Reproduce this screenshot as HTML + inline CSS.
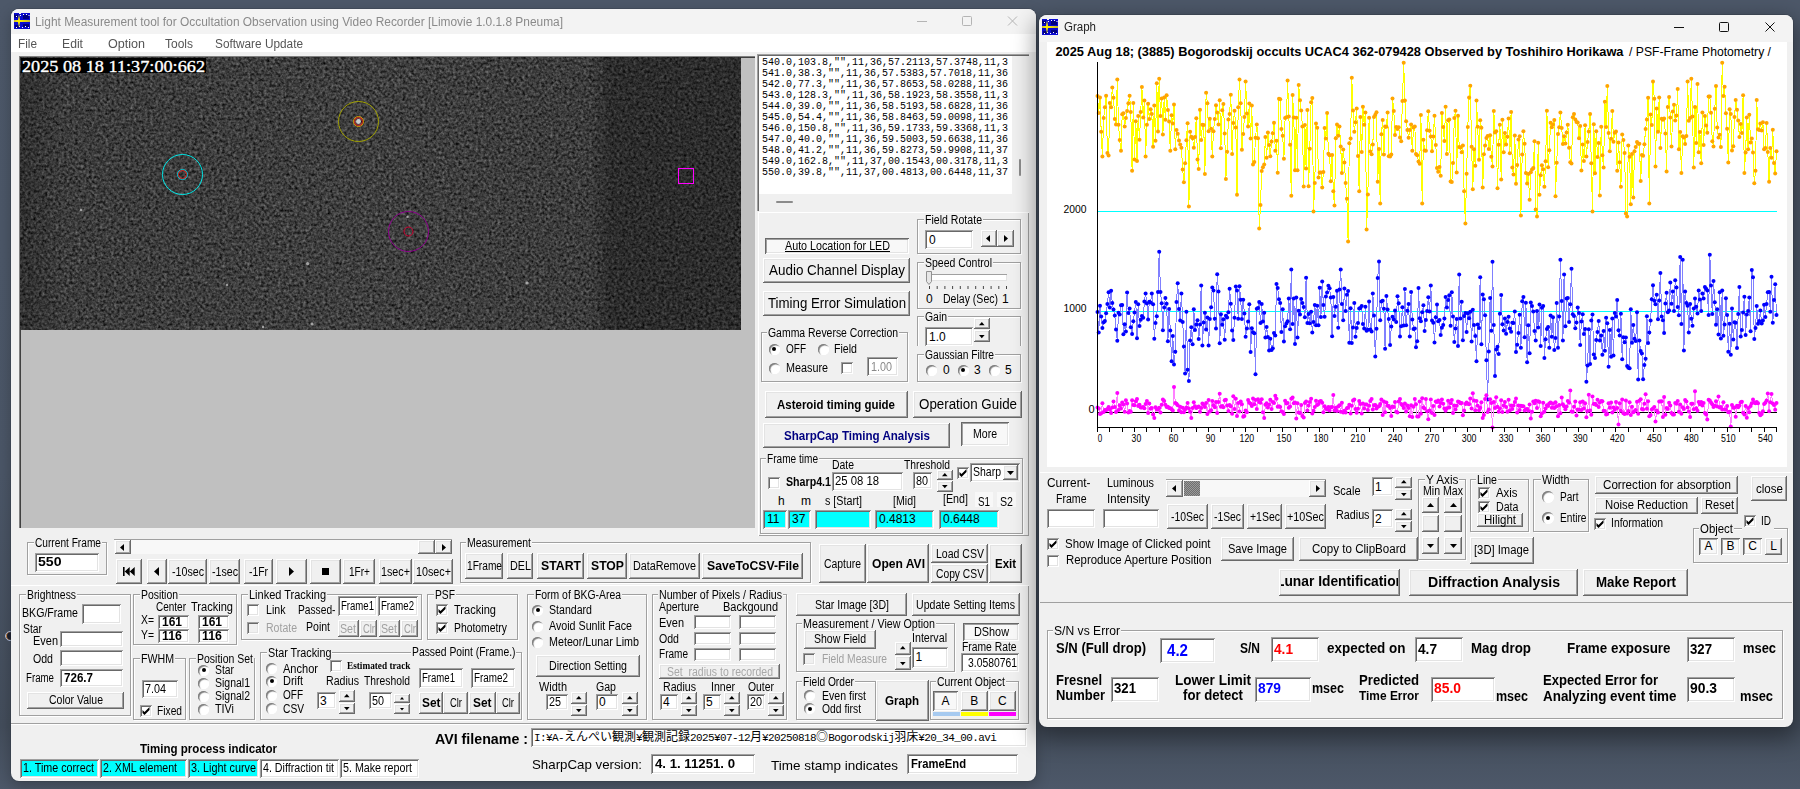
<!DOCTYPE html><html><head><meta charset="utf-8"><title>Limovie</title><style>
html,body{margin:0;padding:0}
body{width:1800px;height:789px;overflow:hidden;position:relative;background:linear-gradient(180deg,#4d5869 0%,#4b5667 60%,#434d5b 92%,#4d5869 100%);font-family:"Liberation Sans","Noto Sans CJK JP",sans-serif;font-size:12px;color:#000}
.abs,.t,.a,.btn,.ed,.fr,.fl,.ck,.rd,.tog,.win{position:absolute;box-sizing:border-box}
.t{white-space:pre;transform-origin:0 50%}
.win{background:#f0f0f0;border-radius:8px;box-shadow:0 0 0 1px rgba(40,45,55,.3),0 8px 22px 4px rgba(0,0,0,.38)}
.btn{background:#f0f0f0;box-shadow:inset -1px -1px 0 #696969,inset 1px 1px 0 #fff,inset -2px -2px 0 #a0a0a0,inset 2px 2px 0 #e3e3e3}
.tog{background:#f8f8f8;box-shadow:inset 1px 1px 0 #696969,inset -1px -1px 0 #fff,inset 2px 2px 0 #a0a0a0,inset -2px -2px 0 #e3e3e3}
.ed{background:#fff;box-shadow:inset 1px 1px 0 #a0a0a0,inset -1px -1px 0 #fff,inset 2px 2px 0 #696969,inset -2px -2px 0 #e3e3e3}
.fr{border:1px solid #a0a0a0;box-shadow:1px 1px 0 #fff,inset 1px 1px 0 #fff}
.fl{background:#f0f0f0}
.ck{background:#fff;box-shadow:inset 1px 1px 0 #a0a0a0,inset -1px -1px 0 #fff,inset 2px 2px 0 #696969,inset -2px -2px 0 #e3e3e3}
.ck.dis{background:#f0f0f0}
.rd{background:#fff;border-radius:50%;box-shadow:inset 1px 1px 0 #808080,inset -1px -1px 0 #fff,inset 1.5px 1.5px 1px #9a9a9a}
.rd i{position:absolute;left:50%;top:50%;width:4px;height:4px;margin:-2px 0 0 -2px;border-radius:50%;background:#000}
</style></head><body>
<div class="abs" style="left:5px;top:630.5px;width:10px;height:10px;border-radius:50%;background:#1c2030;border:1.5px solid #b9c6e6;box-shadow:inset 1px 0 0 #d08030"></div>
<div class="win" style="left:11px;top:9px;width:1025px;height:772px;box-shadow:0 0 0 1px rgba(40,45,55,.22),0 5px 14px 1px rgba(0,0,0,.22)"></div>
<div class="abs" style="left:11px;top:9px;width:1025px;height:25px;background:#f3f3f3;border-radius:8px 8px 0 0"></div>
<div class="abs" style="left:11px;top:34px;width:1025px;height:18px;background:#fff"></div>
<svg class="a" style="left:14px;top:13px" width="16" height="16" viewBox="0 0 16 16"><rect x="0" y="1" width="16" height="15" fill="#0a0ad0"/><path d="M0 0 h5 v1 h2 v-1 h9 v2 h-16z" fill="#0a0ad0"/><path d="M0 1 q2 2 4 0 v3 q-2 2 -4 0z M9 2 h6 v4 h-6z M1 12 h4 v3 h-4z M9 11 h6 v3 h-6z" fill="#000080"/><path d="M2 3h1v1h-1z M6 2h1v1h-1z M9 1h1v1h-1z M12 1h1v1h-1z M14.500 2h1v1h-1z M2 14h1v1h-1z M5 13h1v1h-1z M8 14h1v1h-1z M11 13h1v1h-1z M14 14h1v1h-1z" fill="#fff"/><path d="M0 7.300 L4 7 L5 1.500 L6 7 L16 7.300 L16 8.700 L6 9 L5 14.500 L4 9 L0 8.700 Z" fill="#ffee00"/></svg>
<div class="t" style="left:35.0px;top:13.5px;font-size:12px;line-height:16px;color:#8a8a8a;transform:scaleX(0.9924);">Light Measurement tool for Occultation Observation using Video Recorder [Limovie 1.0.1.8 Pneuma]</div>
<svg class="a" style="left:910px;top:9px" width="126" height="25"><g stroke="#b4b4b4" stroke-width="1" fill="none"><path d="M7 12.5 H17"/><rect x="52.5" y="7.5" width="9" height="9" rx="1"/><path d="M98 7.5 L107 16.5 M107 7.5 L98 16.5"/></g></svg>
<div class="t" style="left:18.0px;top:36.0px;font-size:12px;line-height:16px;color:#555;transform:scaleX(0.9827);">File</div>
<div class="t" style="left:62.0px;top:36.0px;font-size:12px;line-height:16px;color:#555;transform:scaleX(1.0156);">Edit</div>
<div class="t" style="left:108.0px;top:36.0px;font-size:12px;line-height:16px;color:#555;transform:scaleX(1.0466);">Option</div>
<div class="t" style="left:165.0px;top:36.0px;font-size:12px;line-height:16px;color:#555;transform:scaleX(0.9996);">Tools</div>
<div class="t" style="left:215.0px;top:36.0px;font-size:12px;line-height:16px;color:#555;transform:scaleX(0.9846);">Software Update</div>
<div class="abs" style="left:19.0px;top:56.0px;width:736.0px;height:471.5px;background:#c0c0c0;box-shadow:inset 1px 1px 0 #808080,inset 2px 2px 0 #404040;"></div>
<svg class="a" style="left:20px;top:57px" width="721" height="273"><defs><filter id="nz" x="0" y="0" width="100%" height="100%" color-interpolation-filters="sRGB"><feTurbulence type="fractalNoise" baseFrequency="0.36" numOctaves="2" seed="7" result="n"/><feColorMatrix type="matrix" values="0.5 0.2 0 0 -0.105  0.5 0.2 0 0 -0.105  0.5 0.2 0 0 -0.105  0 0 0 0 1"/></filter><linearGradient id="vg" x1="0" x2="1" y1="0" y2="0"><stop offset="0" stop-color="#000" stop-opacity="0.25"/><stop offset="0.06" stop-color="#000" stop-opacity="0.05"/><stop offset="0.5" stop-color="#000" stop-opacity="0"/><stop offset="0.79" stop-color="#000" stop-opacity="0.05"/><stop offset="0.82" stop-color="#000" stop-opacity="0.3"/><stop offset="1" stop-color="#000" stop-opacity="0.3"/></linearGradient></defs><rect width="721" height="273" fill="#3a3a3a"/><rect width="721" height="273" filter="url(#nz)" opacity="1"/><rect width="721" height="273" fill="url(#vg)"/><circle cx="338.5" cy="64.5" r="2.4" fill="#ccc" opacity="1"/><circle cx="287.6" cy="206.6" r="1.7" fill="#ccc" opacity="0.7"/><circle cx="507.0" cy="226.0" r="1.6" fill="#ccc" opacity="0.7"/><circle cx="292.0" cy="267.0" r="1.6" fill="#ccc" opacity="0.7"/><circle cx="61.0" cy="153.0" r="1.3" fill="#ccc" opacity="0.7"/><circle cx="387.5" cy="160.0" r="1.2" fill="#ccc" opacity="0.7"/><circle cx="207.0" cy="228.0" r="1.3" fill="#ccc" opacity="0.7"/><circle cx="243.0" cy="270.0" r="1.2" fill="#ccc" opacity="0.7"/><g fill="none" stroke-width="1"><circle cx="162.5" cy="117.5" r="20" stroke="#00e8e8"/><circle cx="162.5" cy="117.5" r="5" stroke="#00c8d8"/><circle cx="162.5" cy="117.5" r="4" stroke="#e02020"/><circle cx="338.5" cy="64.5" r="20" stroke="#a0a000"/><circle cx="338.5" cy="64.5" r="5" stroke="#d0a000"/><circle cx="338.5" cy="64.5" r="4" stroke="#e02020"/><circle cx="388.5" cy="174.5" r="20" stroke="#900090"/><circle cx="388.5" cy="174.5" r="4.5" stroke="#d00030"/><rect x="658.5" y="111.5" width="15" height="15" stroke="#ff00ff"/></g><rect x="1" y="1" width="185" height="15" fill="#000"/><text x="2" y="14.5" font-family="Liberation Serif,serif" font-size="17.5" fill="#fff" stroke="#fff" stroke-width="0.35" textLength="183" lengthAdjust="spacingAndGlyphs" xml:space="preserve">2025 08 18 11:37:00:662</text></svg>
<div class="abs" style="left:757.0px;top:54.0px;width:272.0px;height:157.0px;background:#f0f0f0;box-shadow:inset 1px 1px 0 #a0a0a0,inset 2px 2px 0 #696969;"></div>
<div class="abs" style="left:759.0px;top:56.0px;width:253.0px;height:138.0px;background:#fff;"></div>
<div class="t" style="left:762.0px;top:56.0px;font-size:10px;line-height:14px;font-family:'Liberation Mono','Noto Sans CJK JP',monospace;letter-spacing:0px;">540.0,103.8,"",11,36,57.2113,57.3748,11,3</div>
<div class="t" style="left:762.0px;top:67.0px;font-size:10px;line-height:14px;font-family:'Liberation Mono','Noto Sans CJK JP',monospace;letter-spacing:0px;">541.0,38.3,"",11,36,57.5383,57.7018,11,36</div>
<div class="t" style="left:762.0px;top:78.0px;font-size:10px;line-height:14px;font-family:'Liberation Mono','Noto Sans CJK JP',monospace;letter-spacing:0px;">542.0,77.3,"",11,36,57.8653,58.0288,11,36</div>
<div class="t" style="left:762.0px;top:89.0px;font-size:10px;line-height:14px;font-family:'Liberation Mono','Noto Sans CJK JP',monospace;letter-spacing:0px;">543.0,128.3,"",11,36,58.1923,58.3558,11,3</div>
<div class="t" style="left:762.0px;top:100.0px;font-size:10px;line-height:14px;font-family:'Liberation Mono','Noto Sans CJK JP',monospace;letter-spacing:0px;">544.0,39.0,"",11,36,58.5193,58.6828,11,36</div>
<div class="t" style="left:762.0px;top:111.0px;font-size:10px;line-height:14px;font-family:'Liberation Mono','Noto Sans CJK JP',monospace;letter-spacing:0px;">545.0,54.4,"",11,36,58.8463,59.0098,11,36</div>
<div class="t" style="left:762.0px;top:122.0px;font-size:10px;line-height:14px;font-family:'Liberation Mono','Noto Sans CJK JP',monospace;letter-spacing:0px;">546.0,150.8,"",11,36,59.1733,59.3368,11,3</div>
<div class="t" style="left:762.0px;top:133.0px;font-size:10px;line-height:14px;font-family:'Liberation Mono','Noto Sans CJK JP',monospace;letter-spacing:0px;">547.0,40.0,"",11,36,59.5003,59.6638,11,36</div>
<div class="t" style="left:762.0px;top:144.0px;font-size:10px;line-height:14px;font-family:'Liberation Mono','Noto Sans CJK JP',monospace;letter-spacing:0px;">548.0,41.2,"",11,36,59.8273,59.9908,11,37</div>
<div class="t" style="left:762.0px;top:155.0px;font-size:10px;line-height:14px;font-family:'Liberation Mono','Noto Sans CJK JP',monospace;letter-spacing:0px;">549.0,162.8,"",11,37,00.1543,00.3178,11,3</div>
<div class="t" style="left:762.0px;top:166.0px;font-size:10px;line-height:14px;font-family:'Liberation Mono','Noto Sans CJK JP',monospace;letter-spacing:0px;">550.0,39.8,"",11,37,00.4813,00.6448,11,37</div>
<div class="abs" style="left:1019.0px;top:159.0px;width:2.0px;height:17.0px;background:#8b8b8b;border-radius:1px"></div>
<div class="abs" style="left:776.0px;top:201.0px;width:17.0px;height:2.0px;background:#8b8b8b;border-radius:1px"></div>
<div class="abs" style="left:758.0px;top:212.0px;width:271.0px;height:324.0px;box-shadow:inset 1px 1px 0 #fff,inset -1px -1px 0 #a0a0a0;"></div>
<div class="tog" style="left:765.0px;top:238.0px;width:144.0px;height:16.0px;"></div>
<div class="t" style="left:784.5px;top:238.0px;font-size:12px;line-height:16px;text-decoration:underline;transform:scaleX(0.8944);">Auto Location for LED</div>
<div class="btn" style="left:763.0px;top:258.0px;width:147.0px;height:24.5px;"></div>
<div class="t" style="left:768.5px;top:261.2px;font-size:14px;line-height:18px;transform:scaleX(0.9602);">Audio Channel Display</div>
<div class="btn" style="left:763.0px;top:290.5px;width:147.0px;height:25.5px;"></div>
<div class="t" style="left:767.5px;top:294.2px;font-size:14px;line-height:18px;transform:scaleX(0.9469);">Timing Error Simulation</div>
<div class="fr" style="left:917.0px;top:219.0px;width:104.0px;height:34.5px;"></div>
<div class="fl" style="left:924.0px;top:213.0px;width:59.0px;height:14.0px;"></div>
<div class="t" style="left:925.0px;top:212.3px;font-size:12px;line-height:16px;transform:scaleX(0.8811);">Field Rotate</div>
<div class="ed" style="left:925.0px;top:230.0px;width:48.0px;height:19.0px;"></div>
<div class="t" style="left:929.0px;top:231.5px;font-size:12px;line-height:16px;">0</div>
<div class="btn" style="left:981.0px;top:230.0px;width:16.0px;height:17.0px;"></div>
<svg class="a" style="left:985.2px;top:234.0px" width="6.0" height="9.0"><polygon points="5.0,1.0 5.0,8.0 1.0,4.5" fill="#000"/></svg>
<div class="btn" style="left:997.0px;top:230.0px;width:17.0px;height:17.0px;"></div>
<svg class="a" style="left:1003.2px;top:234.0px" width="6.0" height="9.0"><polygon points="1.0,1.0 1.0,8.0 5.0,4.5" fill="#000"/></svg>
<div class="fr" style="left:917.0px;top:262.0px;width:104.0px;height:46.5px;"></div>
<div class="fl" style="left:924.0px;top:256.0px;width:69.0px;height:14.0px;"></div>
<div class="t" style="left:925.0px;top:255.3px;font-size:12px;line-height:16px;transform:scaleX(0.8734);">Speed Control</div>
<div class="abs" style="left:930.0px;top:273.5px;width:77.0px;height:7.5px;background:#fff;box-shadow:inset 1px 1px 0 #a0a0a0,inset -1px -1px 0 #e3e3e3;"></div>
<svg class="a" style="left:926px;top:271px" width="7" height="15"><path d="M0.5 0.500 H5.500 V10.500 L3 13.500 L0.500 10.500 Z" fill="#e6e6e6" stroke="#909090"/></svg>
<svg class="a" style="left:928px;top:286px" width="80" height="5"><path d="M1.5 0 V3 M9.2 0 V3 M16.9 0 V3 M24.6 0 V3 M32.3 0 V3 M40.0 0 V3 M47.7 0 V3 M55.4 0 V3 M63.1 0 V3 M70.8 0 V3 M78.5 0 V3 " stroke="#444" stroke-width="1" fill="none"/></svg>
<div class="t" style="left:926.0px;top:291.0px;font-size:12px;line-height:16px;">0</div>
<div class="t" style="left:942.5px;top:291.0px;font-size:12px;line-height:16px;transform:scaleX(0.8775);">Delay (Sec)</div>
<div class="t" style="left:1002.0px;top:291.0px;font-size:12px;line-height:16px;">1</div>
<div class="fr" style="left:917.0px;top:316.0px;width:104.0px;height:33.0px;"></div>
<div class="fl" style="left:924.0px;top:310.0px;width:24.0px;height:14.0px;"></div>
<div class="t" style="left:925.0px;top:309.3px;font-size:12px;line-height:16px;transform:scaleX(0.8680);">Gain</div>
<div class="abs" style="left:916.0px;top:346.0px;width:107.0px;height:6.0px;background:#f0f0f0;"></div>
<div class="ed" style="left:925.0px;top:327.0px;width:48.0px;height:19.0px;"></div>
<div class="t" style="left:929.0px;top:328.5px;font-size:12px;line-height:16px;">1.0</div>
<div class="btn" style="left:974.0px;top:318.0px;width:16.0px;height:11.0px;"></div>
<svg class="a" style="left:978.2px;top:320.6px" width="7.6" height="5.3"><polygon points="1.0,4.3 6.6,4.3 3.8,1.0" fill="#000"/></svg>
<div class="btn" style="left:974.0px;top:330.0px;width:16.0px;height:12.0px;"></div>
<svg class="a" style="left:978.2px;top:333.6px" width="7.6" height="5.3"><polygon points="1.0,1.0 6.6,1.0 3.8,4.3" fill="#000"/></svg>
<div class="fr" style="left:917.0px;top:353.5px;width:104.0px;height:28.0px;"></div>
<div class="fl" style="left:924.0px;top:347.5px;width:71.0px;height:14.0px;"></div>
<div class="t" style="left:925.0px;top:346.8px;font-size:12px;line-height:16px;transform:scaleX(0.8551);">Gaussian Filtre</div>
<div class="rd" style="left:925.5px;top:364.5px;width:11.0px;height:11.0px;"></div>
<div class="t" style="left:943.0px;top:362.0px;font-size:12px;line-height:16px;">0</div>
<div class="rd" style="left:957.5px;top:364.5px;width:11.0px;height:11.0px;"><i></i></div>
<div class="t" style="left:974.0px;top:362.0px;font-size:12px;line-height:16px;">3</div>
<div class="rd" style="left:988.5px;top:364.5px;width:11.0px;height:11.0px;"></div>
<div class="t" style="left:1005.0px;top:362.0px;font-size:12px;line-height:16px;">5</div>
<div class="fr" style="left:761.0px;top:331.5px;width:147.0px;height:50.5px;"></div>
<div class="fl" style="left:767.0px;top:325.5px;width:132.0px;height:14.0px;"></div>
<div class="t" style="left:768.0px;top:324.8px;font-size:12px;line-height:16px;transform:scaleX(0.8703);">Gamma Reverse Correction</div>
<div class="rd" style="left:768.5px;top:343.5px;width:11.0px;height:11.0px;"><i></i></div>
<div class="t" style="left:786.0px;top:341.0px;font-size:12px;line-height:16px;transform:scaleX(0.8336);">OFF</div>
<div class="rd" style="left:817.5px;top:343.5px;width:11.0px;height:11.0px;"></div>
<div class="t" style="left:834.0px;top:341.0px;font-size:12px;line-height:16px;transform:scaleX(0.8843);">Field</div>
<div class="rd" style="left:768.5px;top:362.5px;width:11.0px;height:11.0px;"></div>
<div class="t" style="left:786.0px;top:360.0px;font-size:12px;line-height:16px;transform:scaleX(0.8997);">Measure</div>
<div class="ck" style="left:841.0px;top:362.0px;width:12.0px;height:12.0px;"></div>
<div class="ed" style="left:867.0px;top:357.0px;width:31.0px;height:19.0px;"></div>
<div class="t" style="left:871.0px;top:358.5px;font-size:12px;line-height:16px;color:#8a8a8a;transform:scaleX(0.8992);">1.00</div>
<div class="btn" style="left:765.0px;top:390.5px;width:142.5px;height:27.0px;"></div>
<div class="t" style="left:777.2px;top:395.5px;font-size:13px;line-height:17px;font-weight:bold;transform:scaleX(0.8832);">Asteroid timing guide</div>
<div class="btn" style="left:913.0px;top:390.5px;width:109.0px;height:27.0px;"></div>
<div class="t" style="left:918.5px;top:395.0px;font-size:14px;line-height:18px;transform:scaleX(0.9540);">Operation Guide</div>
<div class="btn" style="left:763.0px;top:422.5px;width:187.0px;height:25.0px;"></div>
<div class="t" style="left:783.5px;top:426.5px;font-size:13px;line-height:17px;font-weight:bold;color:#000080;transform:scaleX(0.8904);">SharpCap Timing Analysis</div>
<div class="tog" style="left:961.0px;top:422.0px;width:48.0px;height:24.0px;"></div>
<div class="t" style="left:973.0px;top:426.0px;font-size:12px;line-height:16px;transform:scaleX(0.8779);">More</div>
<div class="fr" style="left:760.0px;top:457.5px;width:263.0px;height:76.0px;"></div>
<div class="fl" style="left:766.0px;top:451.5px;width:53.0px;height:14.0px;"></div>
<div class="t" style="left:767.0px;top:450.8px;font-size:12px;line-height:16px;transform:scaleX(0.8406);">Frame time</div>
<div class="ck" style="left:768.0px;top:477.0px;width:12.0px;height:12.0px;"></div>
<div class="t" style="left:786.0px;top:474.0px;font-size:12px;line-height:16px;font-weight:bold;transform:scaleX(0.8878);">Sharp4.1</div>
<div class="t" style="left:832.0px;top:457.0px;font-size:12px;line-height:16px;transform:scaleX(0.8680);">Date</div>
<div class="ed" style="left:832.0px;top:472.0px;width:71.0px;height:18.5px;"></div>
<div class="t" style="left:835.0px;top:473.2px;font-size:12px;line-height:16px;transform:scaleX(0.9421);">25 08 18</div>
<div class="t" style="left:904.0px;top:457.0px;font-size:12px;line-height:16px;transform:scaleX(0.8621);">Threshold</div>
<div class="ed" style="left:913.0px;top:472.0px;width:19.0px;height:17.0px;"></div>
<div class="t" style="left:916.0px;top:472.5px;font-size:12px;line-height:16px;transform:scaleX(0.8991);">80</div>
<div class="btn" style="left:937.0px;top:470.0px;width:16.0px;height:10.0px;"></div>
<svg class="a" style="left:941.2px;top:472.1px" width="7.6" height="5.3"><polygon points="1.0,4.3 6.6,4.3 3.8,1.0" fill="#000"/></svg>
<div class="btn" style="left:937.0px;top:481.0px;width:16.0px;height:11.0px;"></div>
<svg class="a" style="left:941.2px;top:484.1px" width="7.6" height="5.3"><polygon points="1.0,1.0 6.6,1.0 3.8,4.3" fill="#000"/></svg>
<div class="ck" style="left:957.0px;top:467.0px;width:12.0px;height:12.0px;"><svg width="12" height="12" viewBox="0 0 12 12" style="position:absolute;left:0;top:0"><path d="M2.5 5 L4.5 7 L9.5 2 L9.5 5 L4.5 10 L2.5 8 Z" fill="#000"/></svg></div>
<div class="ed" style="left:969.5px;top:462.5px;width:50.5px;height:19.0px;"></div>
<div class="t" style="left:973.0px;top:464.0px;font-size:12px;line-height:16px;transform:scaleX(0.8745);">Sharp</div>
<div class="btn" style="left:1003.0px;top:464.5px;width:15.0px;height:15.0px;"></div>
<svg class="a" style="left:1006.0px;top:469.8px" width="9.0" height="6.0"><polygon points="1.0,1.0 8.0,1.0 4.5,5.0" fill="#000"/></svg>
<div class="t" style="left:778.0px;top:492.5px;font-size:12px;line-height:16px;">h</div>
<div class="t" style="left:801.0px;top:492.5px;font-size:12px;line-height:16px;">m</div>
<div class="t" style="left:825.0px;top:492.5px;font-size:12px;line-height:16px;transform:scaleX(0.8950);">s [Start]</div>
<div class="t" style="left:893.0px;top:492.5px;font-size:12px;line-height:16px;transform:scaleX(0.8845);">[Mid]</div>
<div class="t" style="left:943.0px;top:490.5px;font-size:12px;line-height:16px;transform:scaleX(0.8923);">[End]</div>
<div class="abs" style="left:975.0px;top:492.0px;width:18.0px;height:15.0px;background:#f8f8f8"></div>
<div class="t" style="left:978.0px;top:494.0px;font-size:12px;line-height:16px;transform:scaleX(0.8176);">S1</div>
<div class="abs" style="left:997.0px;top:492.0px;width:19.0px;height:15.0px;background:#f8f8f8"></div>
<div class="t" style="left:1000.0px;top:494.0px;font-size:12px;line-height:16px;transform:scaleX(0.8857);">S2</div>
<div class="ed" style="left:763.0px;top:509.5px;width:24.0px;height:19.0px;background:#00ffff;"></div>
<div class="t" style="left:767.0px;top:511.0px;font-size:12px;line-height:16px;">11</div>
<div class="ed" style="left:788.0px;top:509.5px;width:23.0px;height:19.0px;background:#00ffff;"></div>
<div class="t" style="left:792.0px;top:511.0px;font-size:12px;line-height:16px;">37</div>
<div class="ed" style="left:815.0px;top:509.5px;width:56.0px;height:19.0px;background:#00ffff;"></div>
<div class="ed" style="left:875.0px;top:509.5px;width:59.0px;height:19.0px;background:#00ffff;"></div>
<div class="t" style="left:879.0px;top:511.0px;font-size:12px;line-height:16px;">0.4813</div>
<div class="ed" style="left:939.0px;top:509.5px;width:60.0px;height:19.0px;background:#00ffff;"></div>
<div class="t" style="left:943.0px;top:511.0px;font-size:12px;line-height:16px;">0.6448</div>
<div class="fr" style="left:27.0px;top:542.0px;width:80.0px;height:33.0px;"></div>
<div class="fl" style="left:34.0px;top:536.0px;width:68.0px;height:14.0px;"></div>
<div class="t" style="left:35.0px;top:535.3px;font-size:12px;line-height:16px;transform:scaleX(0.8460);">Current Frame</div>
<div class="ed" style="left:35.0px;top:553.0px;width:64.0px;height:19.0px;"></div>
<div class="t" style="left:38.0px;top:553.5px;font-size:12px;line-height:16px;font-weight:bold;transform:scaleX(1.1739);">550</div>
<div class="abs" style="left:114.0px;top:539.0px;width:338.0px;height:15.0px;background:#f8f8f8;box-shadow:inset 0 1px 0 #a0a0a0;"></div>
<div class="btn" style="left:115.0px;top:540.0px;width:16.0px;height:14.0px;"></div>
<svg class="a" style="left:119.2px;top:542.5px" width="6.0" height="9.0"><polygon points="5.0,1.0 5.0,8.0 1.0,4.5" fill="#000"/></svg>
<div class="btn" style="left:435.0px;top:540.0px;width:17.0px;height:14.0px;"></div>
<svg class="a" style="left:441.2px;top:542.5px" width="6.0" height="9.0"><polygon points="1.0,1.0 1.0,8.0 5.0,4.5" fill="#000"/></svg>
<div class="btn" style="left:418.0px;top:540.0px;width:17.0px;height:14.0px;"></div>
<div class="btn" style="left:116.0px;top:559.0px;width:26.0px;height:25.0px;"></div>
<svg class="a" style="left:122.5px;top:567.0px" width="12" height="9"><path d="M0 0 h1.6 v9 h-1.6z M6.7 0 v9 l-5 -4.5z M11.7 0 v9 l-5 -4.5z" fill="#000"/></svg>
<div class="btn" style="left:147.0px;top:559.0px;width:20.0px;height:25.0px;"></div>
<svg class="a" style="left:152.8px;top:566.0px" width="7.0" height="11.0"><polygon points="6.0,1.0 6.0,10.0 1.0,5.5" fill="#000"/></svg>
<div class="btn" style="left:168.0px;top:559.0px;width:39.0px;height:25.0px;"></div>
<div class="t" style="left:171.5px;top:563.5px;font-size:12px;line-height:16px;transform:scaleX(0.8885);">-10sec</div>
<div class="btn" style="left:209.0px;top:559.0px;width:31.0px;height:25.0px;"></div>
<div class="t" style="left:211.5px;top:563.5px;font-size:12px;line-height:16px;transform:scaleX(0.8861);">-1sec</div>
<div class="btn" style="left:244.0px;top:559.0px;width:29.0px;height:25.0px;"></div>
<div class="t" style="left:249.0px;top:563.5px;font-size:12px;line-height:16px;transform:scaleX(0.8639);">-1Fr</div>
<div class="btn" style="left:276.0px;top:559.0px;width:31.0px;height:25.0px;"></div>
<svg class="a" style="left:288.2px;top:566.0px" width="7.0" height="11.0"><polygon points="1.0,1.0 1.0,10.0 6.0,5.5" fill="#000"/></svg>
<div class="btn" style="left:310.0px;top:559.0px;width:31.0px;height:25.0px;"></div>
<div class="abs" style="left:322.0px;top:568.0px;width:7.0px;height:7.0px;background:#000"></div>
<div class="btn" style="left:343.0px;top:559.0px;width:32.0px;height:25.0px;"></div>
<div class="t" style="left:348.5px;top:563.5px;font-size:12px;line-height:16px;transform:scaleX(0.8398);">1Fr+</div>
<div class="btn" style="left:379.0px;top:559.0px;width:33.0px;height:25.0px;"></div>
<div class="t" style="left:381.0px;top:563.5px;font-size:12px;line-height:16px;transform:scaleX(0.8963);">1sec+</div>
<div class="btn" style="left:413.0px;top:559.0px;width:40.0px;height:25.0px;"></div>
<div class="t" style="left:415.5px;top:563.5px;font-size:12px;line-height:16px;transform:scaleX(0.8968);">10sec+</div>
<div class="fr" style="left:460.0px;top:542.0px;width:351.0px;height:41.0px;"></div>
<div class="fl" style="left:466.0px;top:536.0px;width:66.0px;height:14.0px;"></div>
<div class="t" style="left:467.0px;top:535.3px;font-size:12px;line-height:16px;transform:scaleX(0.8724);">Measurement</div>
<div class="btn" style="left:465.0px;top:552.5px;width:38.0px;height:26.0px;"></div>
<div class="t" style="left:466.5px;top:557.5px;font-size:12px;line-height:16px;transform:scaleX(0.8466);">1Frame</div>
<div class="btn" style="left:507.0px;top:552.5px;width:26.0px;height:26.0px;"></div>
<div class="t" style="left:509.5px;top:557.5px;font-size:12px;line-height:16px;transform:scaleX(0.8996);">DEL</div>
<div class="btn" style="left:537.0px;top:552.5px;width:47.0px;height:26.0px;"></div>
<div class="t" style="left:540.5px;top:557.0px;font-size:13px;line-height:17px;font-weight:bold;transform:scaleX(0.9442);">START</div>
<div class="btn" style="left:587.0px;top:552.5px;width:40.0px;height:26.0px;"></div>
<div class="t" style="left:590.5px;top:557.0px;font-size:13px;line-height:17px;font-weight:bold;transform:scaleX(0.9386);">STOP</div>
<div class="btn" style="left:629.0px;top:552.5px;width:71.0px;height:26.0px;"></div>
<div class="t" style="left:633.0px;top:557.5px;font-size:12px;line-height:16px;transform:scaleX(0.8996);">DataRemove</div>
<div class="btn" style="left:702.0px;top:552.5px;width:101.0px;height:26.0px;"></div>
<div class="t" style="left:706.5px;top:557.0px;font-size:13px;line-height:17px;font-weight:bold;transform:scaleX(0.9387);">SaveToCSV-File</div>
<div class="btn" style="left:819.0px;top:544.0px;width:47.0px;height:39.0px;"></div>
<div class="t" style="left:824.0px;top:555.5px;font-size:12px;line-height:16px;transform:scaleX(0.8668);">Capture</div>
<div class="btn" style="left:867.0px;top:544.0px;width:62.0px;height:39.0px;"></div>
<div class="t" style="left:871.5px;top:555.0px;font-size:13px;line-height:17px;font-weight:bold;transform:scaleX(0.9289);">Open AVI</div>
<div class="btn" style="left:931.0px;top:544.0px;width:57.0px;height:19.0px;"></div>
<div class="t" style="left:935.5px;top:545.5px;font-size:12px;line-height:16px;transform:scaleX(0.8775);">Load CSV</div>
<div class="btn" style="left:931.0px;top:564.0px;width:57.0px;height:19.0px;"></div>
<div class="t" style="left:935.5px;top:565.5px;font-size:12px;line-height:16px;transform:scaleX(0.8568);">Copy CSV</div>
<div class="btn" style="left:989.0px;top:544.0px;width:33.0px;height:39.0px;"></div>
<div class="t" style="left:995.0px;top:555.0px;font-size:13px;line-height:17px;font-weight:bold;transform:scaleX(0.8808);">Exit</div>
<div class="abs" style="left:11.0px;top:585.0px;width:1018.0px;height:139.0px;box-shadow:inset 0 1px 0 #fff,inset -1px -1px 0 #a0a0a0;"></div>
<div class="fr" style="left:19.0px;top:594.0px;width:112.0px;height:122.0px;"></div>
<div class="fl" style="left:26.0px;top:588.0px;width:51.0px;height:14.0px;"></div>
<div class="t" style="left:27.0px;top:587.3px;font-size:12px;line-height:16px;transform:scaleX(0.8643);">Brightness</div>
<div class="t" style="left:21.5px;top:604.5px;font-size:12px;line-height:16px;transform:scaleX(0.8841);">BKG/Frame</div>
<div class="ed" style="left:82.0px;top:604.0px;width:39.0px;height:20.0px;"></div>
<div class="t" style="left:23.0px;top:620.5px;font-size:12px;line-height:16px;transform:scaleX(0.8634);">Star</div>
<div class="t" style="left:33.0px;top:633.0px;font-size:12px;line-height:16px;transform:scaleX(0.9141);">Even</div>
<div class="ed" style="left:60.0px;top:630.5px;width:63.0px;height:16.0px;"></div>
<div class="t" style="left:33.0px;top:651.0px;font-size:12px;line-height:16px;transform:scaleX(0.8818);">Odd</div>
<div class="ed" style="left:60.0px;top:649.5px;width:63.0px;height:16.5px;"></div>
<div class="t" style="left:25.5px;top:669.5px;font-size:12px;line-height:16px;transform:scaleX(0.8077);">Frame</div>
<div class="ed" style="left:60.0px;top:668.5px;width:63.0px;height:18.5px;"></div>
<div class="t" style="left:64.0px;top:669.8px;font-size:12px;line-height:16px;font-weight:bold;transform:scaleX(0.9658);">726.7</div>
<div class="btn" style="left:27.0px;top:691.5px;width:97.0px;height:17.0px;"></div>
<div class="t" style="left:48.5px;top:692.0px;font-size:12px;line-height:16px;transform:scaleX(0.8737);">Color Value</div>
<div class="fr" style="left:133.0px;top:594.0px;width:104.0px;height:51.0px;"></div>
<div class="fl" style="left:140.0px;top:588.0px;width:39.0px;height:14.0px;"></div>
<div class="t" style="left:141.0px;top:587.3px;font-size:12px;line-height:16px;transform:scaleX(0.8667);">Position</div>
<div class="t" style="left:155.5px;top:599.0px;font-size:12px;line-height:16px;transform:scaleX(0.8330);">Center</div>
<div class="t" style="left:190.5px;top:599.0px;font-size:12px;line-height:16px;transform:scaleX(0.9217);">Tracking</div>
<div class="t" style="left:141.0px;top:611.5px;font-size:12px;line-height:16px;transform:scaleX(0.8659);">X=</div>
<div class="t" style="left:141.0px;top:626.5px;font-size:12px;line-height:16px;transform:scaleX(0.8659);">Y=</div>
<div class="ed" style="left:158.0px;top:615.0px;width:31.0px;height:14.0px;"></div>
<div class="t" style="left:162.0px;top:614.0px;font-size:12px;line-height:16px;font-weight:bold;transform:scaleX(0.9990);">161</div>
<div class="ed" style="left:198.0px;top:615.0px;width:31.0px;height:14.0px;"></div>
<div class="t" style="left:202.0px;top:614.0px;font-size:12px;line-height:16px;font-weight:bold;transform:scaleX(0.9990);">161</div>
<div class="ed" style="left:158.0px;top:629.0px;width:31.0px;height:14.0px;"></div>
<div class="t" style="left:162.0px;top:628.0px;font-size:12px;line-height:16px;font-weight:bold;transform:scaleX(1.0332);">116</div>
<div class="ed" style="left:198.0px;top:629.0px;width:31.0px;height:14.0px;"></div>
<div class="t" style="left:202.0px;top:628.0px;font-size:12px;line-height:16px;font-weight:bold;transform:scaleX(1.0332);">116</div>
<div class="fr" style="left:133.0px;top:658.0px;width:53.0px;height:62.0px;"></div>
<div class="fl" style="left:140.0px;top:652.0px;width:35.0px;height:14.0px;"></div>
<div class="t" style="left:141.0px;top:651.3px;font-size:12px;line-height:16px;transform:scaleX(0.8843);">FWHM</div>
<div class="ed" style="left:142.0px;top:680.0px;width:36.0px;height:18.0px;"></div>
<div class="t" style="left:145.0px;top:681.0px;font-size:12px;line-height:16px;transform:scaleX(0.8992);">7.04</div>
<div class="ck" style="left:140.0px;top:705.0px;width:12.0px;height:12.0px;"><svg width="12" height="12" viewBox="0 0 12 12" style="position:absolute;left:0;top:0"><path d="M2.5 5 L4.5 7 L9.5 2 L9.5 5 L4.5 10 L2.5 8 Z" fill="#000"/></svg></div>
<div class="t" style="left:157.0px;top:702.5px;font-size:12px;line-height:16px;transform:scaleX(0.8520);">Fixed</div>
<div class="fr" style="left:189.0px;top:658.0px;width:66.0px;height:62.0px;"></div>
<div class="fl" style="left:196.0px;top:652.0px;width:58.0px;height:14.0px;"></div>
<div class="t" style="left:197.0px;top:651.3px;font-size:12px;line-height:16px;transform:scaleX(0.8745);">Position Set</div>
<div class="rd" style="left:198.0px;top:664.5px;width:11.0px;height:11.0px;"><i></i></div>
<div class="t" style="left:215.0px;top:662.0px;font-size:12px;line-height:16px;transform:scaleX(0.8634);">Star</div>
<div class="rd" style="left:198.0px;top:677.5px;width:11.0px;height:11.0px;"></div>
<div class="t" style="left:215.0px;top:675.0px;font-size:12px;line-height:16px;transform:scaleX(0.8744);">Signal1</div>
<div class="rd" style="left:198.0px;top:690.5px;width:11.0px;height:11.0px;"></div>
<div class="t" style="left:215.0px;top:688.0px;font-size:12px;line-height:16px;transform:scaleX(0.8744);">Signal2</div>
<div class="rd" style="left:198.0px;top:703.5px;width:11.0px;height:11.0px;"></div>
<div class="t" style="left:215.0px;top:701.0px;font-size:12px;line-height:16px;transform:scaleX(0.8998);">TIVi</div>
<div class="fr" style="left:241.0px;top:594.0px;width:181.0px;height:46.0px;"></div>
<div class="fl" style="left:248.0px;top:588.0px;width:79.0px;height:14.0px;"></div>
<div class="t" style="left:249.0px;top:587.3px;font-size:12px;line-height:16px;transform:scaleX(0.9162);">Linked Tracking</div>
<div class="ck" style="left:247.0px;top:604.0px;width:12.0px;height:12.0px;"></div>
<div class="t" style="left:265.5px;top:602.0px;font-size:12px;line-height:16px;transform:scaleX(0.8859);">Link</div>
<div class="t" style="left:297.5px;top:602.0px;font-size:12px;line-height:16px;transform:scaleX(0.8519);">Passed-</div>
<div class="ck dis" style="left:247.0px;top:622.0px;width:12.0px;height:12.0px;"></div>
<div class="t" style="left:265.5px;top:620.0px;font-size:12px;line-height:16px;color:#a0a0a0;transform:scaleX(0.8769);">Rotate</div>
<div class="t" style="left:305.5px;top:619.0px;font-size:12px;line-height:16px;transform:scaleX(0.8775);">Point</div>
<div class="ed" style="left:338.0px;top:596.0px;width:39.0px;height:20.0px;"></div>
<div class="t" style="left:341.0px;top:598.0px;font-size:12px;line-height:16px;transform:scaleX(0.7983);">Frame1</div>
<div class="ed" style="left:378.0px;top:596.0px;width:40.0px;height:20.0px;"></div>
<div class="t" style="left:381.0px;top:598.0px;font-size:12px;line-height:16px;transform:scaleX(0.7983);">Frame2</div>
<div class="btn" style="left:337.5px;top:620.0px;width:21.5px;height:17.0px;"></div>
<div class="t" style="left:340.2px;top:620.5px;font-size:12px;line-height:16px;color:#a0a0a0;transform:scaleX(0.8883);">Set</div>
<div class="btn" style="left:360.0px;top:620.0px;width:17.0px;height:17.0px;"></div>
<div class="t" style="left:362.5px;top:620.5px;font-size:12px;line-height:16px;color:#a0a0a0;transform:scaleX(0.7829);">Clr</div>
<div class="btn" style="left:378.5px;top:620.0px;width:21.5px;height:17.0px;"></div>
<div class="t" style="left:381.2px;top:620.5px;font-size:12px;line-height:16px;color:#a0a0a0;transform:scaleX(0.8883);">Set</div>
<div class="btn" style="left:401.0px;top:620.0px;width:17.0px;height:17.0px;"></div>
<div class="t" style="left:403.5px;top:620.5px;font-size:12px;line-height:16px;color:#a0a0a0;transform:scaleX(0.7829);">Clr</div>
<div class="fr" style="left:427.0px;top:594.0px;width:91.0px;height:46.0px;"></div>
<div class="fl" style="left:434.0px;top:588.0px;width:22.0px;height:14.0px;"></div>
<div class="t" style="left:435.0px;top:587.3px;font-size:12px;line-height:16px;transform:scaleX(0.8570);">PSF</div>
<div class="ck" style="left:436.0px;top:604.0px;width:12.0px;height:12.0px;"><svg width="12" height="12" viewBox="0 0 12 12" style="position:absolute;left:0;top:0"><path d="M2.5 5 L4.5 7 L9.5 2 L9.5 5 L4.5 10 L2.5 8 Z" fill="#000"/></svg></div>
<div class="t" style="left:454.0px;top:602.0px;font-size:12px;line-height:16px;transform:scaleX(0.9217);">Tracking</div>
<div class="ck" style="left:436.0px;top:622.0px;width:12.0px;height:12.0px;"><svg width="12" height="12" viewBox="0 0 12 12" style="position:absolute;left:0;top:0"><path d="M2.5 5 L4.5 7 L9.5 2 L9.5 5 L4.5 10 L2.5 8 Z" fill="#000"/></svg></div>
<div class="t" style="left:454.0px;top:620.0px;font-size:12px;line-height:16px;transform:scaleX(0.8638);">Photometry</div>
<div class="fr" style="left:260.0px;top:652.0px;width:262.0px;height:68.0px;"></div>
<div class="fl" style="left:266.5px;top:646.0px;width:65.5px;height:14.0px;"></div>
<div class="t" style="left:267.5px;top:645.3px;font-size:12px;line-height:16px;transform:scaleX(0.8983);">Star Tracking</div>
<div class="fl" style="left:411.0px;top:645.0px;width:105.0px;height:14.0px;"></div>
<div class="t" style="left:411.5px;top:644.0px;font-size:12px;line-height:16px;transform:scaleX(0.8623);">Passed Point (Frame.)</div>
<div class="rd" style="left:266.0px;top:663.0px;width:11.0px;height:11.0px;"></div>
<div class="t" style="left:282.5px;top:660.5px;font-size:12px;line-height:16px;transform:scaleX(0.9206);">Anchor</div>
<div class="rd" style="left:266.0px;top:675.5px;width:11.0px;height:11.0px;"><i></i></div>
<div class="t" style="left:282.5px;top:673.0px;font-size:12px;line-height:16px;transform:scaleX(0.9093);">Drift</div>
<div class="rd" style="left:266.0px;top:689.5px;width:11.0px;height:11.0px;"></div>
<div class="t" style="left:282.5px;top:687.0px;font-size:12px;line-height:16px;transform:scaleX(0.8336);">OFF</div>
<div class="rd" style="left:266.0px;top:703.0px;width:11.0px;height:11.0px;"></div>
<div class="t" style="left:282.5px;top:700.5px;font-size:12px;line-height:16px;transform:scaleX(0.8511);">CSV</div>
<div class="ck" style="left:330.0px;top:660.0px;width:12.0px;height:12.0px;"></div>
<div class="t" style="left:346.5px;top:658.0px;font-size:11px;line-height:15px;font-weight:bold;font-family:'Liberation Serif',serif;transform:scaleX(0.8415);">Estimated track</div>
<div class="t" style="left:325.5px;top:673.0px;font-size:12px;line-height:16px;transform:scaleX(0.8835);">Radius</div>
<div class="t" style="left:364.0px;top:673.0px;font-size:12px;line-height:16px;transform:scaleX(0.8621);">Threshold</div>
<div class="ed" style="left:317.0px;top:692.0px;width:19.0px;height:17.0px;"></div>
<div class="t" style="left:320.0px;top:692.5px;font-size:12px;line-height:16px;">3</div>
<div class="btn" style="left:339.0px;top:690.0px;width:16.0px;height:12.0px;"></div>
<svg class="a" style="left:343.2px;top:693.1px" width="7.6" height="5.3"><polygon points="1.0,4.3 6.6,4.3 3.8,1.0" fill="#000"/></svg>
<div class="btn" style="left:339.0px;top:703.0px;width:16.0px;height:11.0px;"></div>
<svg class="a" style="left:343.2px;top:706.1px" width="7.6" height="5.3"><polygon points="1.0,1.0 6.6,1.0 3.8,4.3" fill="#000"/></svg>
<div class="ed" style="left:369.0px;top:692.0px;width:23.0px;height:17.0px;"></div>
<div class="t" style="left:372.0px;top:692.5px;font-size:12px;line-height:16px;transform:scaleX(0.8991);">50</div>
<div class="btn" style="left:394.0px;top:694.0px;width:16.0px;height:9.0px;"></div>
<svg class="a" style="left:399.0px;top:696.0px" width="6.0" height="4.5"><polygon points="1.0,3.5 5.0,3.5 3.0,1.0" fill="#000"/></svg>
<div class="btn" style="left:394.0px;top:704.0px;width:16.0px;height:10.0px;"></div>
<svg class="a" style="left:399.0px;top:707.0px" width="6.0" height="4.5"><polygon points="1.0,1.0 5.0,1.0 3.0,3.5" fill="#000"/></svg>
<div class="ed" style="left:419.0px;top:668.0px;width:44.0px;height:20.0px;"></div>
<div class="t" style="left:422.0px;top:670.0px;font-size:12px;line-height:16px;transform:scaleX(0.7983);">Frame1</div>
<div class="ed" style="left:471.0px;top:668.0px;width:44.0px;height:20.0px;"></div>
<div class="t" style="left:474.0px;top:670.0px;font-size:12px;line-height:16px;transform:scaleX(0.8224);">Frame2</div>
<div class="btn" style="left:419.0px;top:692.0px;width:24.0px;height:22.0px;"></div>
<div class="t" style="left:421.8px;top:695.0px;font-size:12px;line-height:16px;font-weight:bold;transform:scaleX(0.9907);">Set</div>
<div class="btn" style="left:443.0px;top:692.0px;width:25.0px;height:22.0px;"></div>
<div class="t" style="left:449.5px;top:695.0px;font-size:12px;line-height:16px;transform:scaleX(0.7829);">Clr</div>
<div class="btn" style="left:469.0px;top:692.0px;width:27.0px;height:22.0px;"></div>
<div class="t" style="left:473.2px;top:695.0px;font-size:12px;line-height:16px;font-weight:bold;transform:scaleX(0.9907);">Set</div>
<div class="btn" style="left:496.0px;top:692.0px;width:24.0px;height:22.0px;"></div>
<div class="t" style="left:502.0px;top:695.0px;font-size:12px;line-height:16px;transform:scaleX(0.7829);">Clr</div>
<div class="fr" style="left:527.0px;top:594.0px;width:120.0px;height:126.0px;"></div>
<div class="fl" style="left:534.0px;top:588.0px;width:88.0px;height:14.0px;"></div>
<div class="t" style="left:535.0px;top:587.3px;font-size:12px;line-height:16px;transform:scaleX(0.8656);">Form of BKG-Area</div>
<div class="rd" style="left:532.0px;top:604.5px;width:11.0px;height:11.0px;"><i></i></div>
<div class="t" style="left:549.0px;top:602.0px;font-size:12px;line-height:16px;transform:scaleX(0.8830);">Standard</div>
<div class="rd" style="left:532.0px;top:620.5px;width:11.0px;height:11.0px;"></div>
<div class="t" style="left:549.0px;top:618.0px;font-size:12px;line-height:16px;transform:scaleX(0.8909);">Avoid Sunlit Face</div>
<div class="rd" style="left:532.0px;top:636.5px;width:11.0px;height:11.0px;"></div>
<div class="t" style="left:549.0px;top:634.0px;font-size:12px;line-height:16px;transform:scaleX(0.8937);">Meteor/Lunar Limb</div>
<div class="btn" style="left:536.0px;top:655.0px;width:104.0px;height:22.0px;"></div>
<div class="t" style="left:549.0px;top:658.0px;font-size:12px;line-height:16px;transform:scaleX(0.8860);">Direction Setting</div>
<div class="t" style="left:539.0px;top:678.5px;font-size:12px;line-height:16px;transform:scaleX(0.9129);">Width</div>
<div class="t" style="left:595.5px;top:678.5px;font-size:12px;line-height:16px;transform:scaleX(0.8818);">Gap</div>
<div class="ed" style="left:546.0px;top:694.0px;width:22.0px;height:16.0px;"></div>
<div class="t" style="left:549.0px;top:694.0px;font-size:12px;line-height:16px;transform:scaleX(0.8991);">25</div>
<div class="btn" style="left:571.0px;top:692.0px;width:16.0px;height:12.0px;"></div>
<svg class="a" style="left:575.2px;top:695.1px" width="7.6" height="5.3"><polygon points="1.0,4.3 6.6,4.3 3.8,1.0" fill="#000"/></svg>
<div class="btn" style="left:571.0px;top:705.0px;width:16.0px;height:11.0px;"></div>
<svg class="a" style="left:575.2px;top:708.1px" width="7.6" height="5.3"><polygon points="1.0,1.0 6.6,1.0 3.8,4.3" fill="#000"/></svg>
<div class="ed" style="left:596.0px;top:694.0px;width:22.0px;height:16.0px;"></div>
<div class="t" style="left:599.0px;top:694.0px;font-size:12px;line-height:16px;">0</div>
<div class="btn" style="left:622.0px;top:692.0px;width:16.0px;height:12.0px;"></div>
<svg class="a" style="left:626.2px;top:695.1px" width="7.6" height="5.3"><polygon points="1.0,4.3 6.6,4.3 3.8,1.0" fill="#000"/></svg>
<div class="btn" style="left:622.0px;top:705.0px;width:16.0px;height:11.0px;"></div>
<svg class="a" style="left:626.2px;top:708.1px" width="7.6" height="5.3"><polygon points="1.0,1.0 6.6,1.0 3.8,4.3" fill="#000"/></svg>
<div class="fr" style="left:652.0px;top:594.0px;width:135.0px;height:126.0px;"></div>
<div class="fl" style="left:658.0px;top:588.0px;width:125.0px;height:14.0px;"></div>
<div class="t" style="left:659.0px;top:587.3px;font-size:12px;line-height:16px;transform:scaleX(0.8867);">Number of Pixels / Radius</div>
<div class="t" style="left:659.0px;top:599.0px;font-size:12px;line-height:16px;transform:scaleX(0.8692);">Aperture</div>
<div class="t" style="left:723.0px;top:599.0px;font-size:12px;line-height:16px;transform:scaleX(0.9160);">Backgound</div>
<div class="t" style="left:659.0px;top:614.5px;font-size:12px;line-height:16px;transform:scaleX(0.9141);">Even</div>
<div class="ed" style="left:694.0px;top:615.0px;width:37.0px;height:14.0px;"></div>
<div class="ed" style="left:739.0px;top:615.0px;width:37.0px;height:14.0px;"></div>
<div class="t" style="left:659.0px;top:630.5px;font-size:12px;line-height:16px;transform:scaleX(0.8818);">Odd</div>
<div class="ed" style="left:694.0px;top:631.5px;width:37.0px;height:13.0px;"></div>
<div class="ed" style="left:739.0px;top:631.5px;width:37.0px;height:13.0px;"></div>
<div class="t" style="left:659.0px;top:645.5px;font-size:12px;line-height:16px;transform:scaleX(0.8365);">Frame</div>
<div class="ed" style="left:694.0px;top:647.5px;width:37.0px;height:13.0px;"></div>
<div class="ed" style="left:739.0px;top:647.5px;width:37.0px;height:13.0px;"></div>
<div class="btn" style="left:659.0px;top:664.0px;width:121.0px;height:15.0px;"></div>
<div class="t" style="left:666.5px;top:663.5px;font-size:12px;line-height:16px;color:#a8a8a8;transform:scaleX(0.8732);">Set  radius to recorded</div>
<div class="t" style="left:663.0px;top:678.5px;font-size:12px;line-height:16px;transform:scaleX(0.8835);">Radius</div>
<div class="t" style="left:711.0px;top:678.5px;font-size:12px;line-height:16px;transform:scaleX(0.8776);">Inner</div>
<div class="t" style="left:747.5px;top:678.5px;font-size:12px;line-height:16px;transform:scaleX(0.8664);">Outer</div>
<div class="ed" style="left:660.0px;top:694.0px;width:18.0px;height:16.0px;"></div>
<div class="t" style="left:663.0px;top:694.0px;font-size:12px;line-height:16px;">4</div>
<div class="btn" style="left:681.0px;top:692.0px;width:16.0px;height:12.0px;"></div>
<svg class="a" style="left:685.2px;top:695.1px" width="7.6" height="5.3"><polygon points="1.0,4.3 6.6,4.3 3.8,1.0" fill="#000"/></svg>
<div class="btn" style="left:681.0px;top:705.0px;width:16.0px;height:11.0px;"></div>
<svg class="a" style="left:685.2px;top:708.1px" width="7.6" height="5.3"><polygon points="1.0,1.0 6.6,1.0 3.8,4.3" fill="#000"/></svg>
<div class="ed" style="left:703.0px;top:694.0px;width:18.0px;height:16.0px;"></div>
<div class="t" style="left:706.0px;top:694.0px;font-size:12px;line-height:16px;">5</div>
<div class="btn" style="left:724.0px;top:692.0px;width:16.0px;height:12.0px;"></div>
<svg class="a" style="left:728.2px;top:695.1px" width="7.6" height="5.3"><polygon points="1.0,4.3 6.6,4.3 3.8,1.0" fill="#000"/></svg>
<div class="btn" style="left:724.0px;top:705.0px;width:16.0px;height:11.0px;"></div>
<svg class="a" style="left:728.2px;top:708.1px" width="7.6" height="5.3"><polygon points="1.0,1.0 6.6,1.0 3.8,4.3" fill="#000"/></svg>
<div class="ed" style="left:747.0px;top:694.0px;width:18.0px;height:16.0px;"></div>
<div class="t" style="left:750.0px;top:694.0px;font-size:12px;line-height:16px;transform:scaleX(0.8991);">20</div>
<div class="btn" style="left:768.0px;top:692.0px;width:16.0px;height:12.0px;"></div>
<svg class="a" style="left:772.2px;top:695.1px" width="7.6" height="5.3"><polygon points="1.0,4.3 6.6,4.3 3.8,1.0" fill="#000"/></svg>
<div class="btn" style="left:768.0px;top:705.0px;width:16.0px;height:11.0px;"></div>
<svg class="a" style="left:772.2px;top:708.1px" width="7.6" height="5.3"><polygon points="1.0,1.0 6.6,1.0 3.8,4.3" fill="#000"/></svg>
<div class="btn" style="left:796.0px;top:593.0px;width:111.0px;height:23.0px;"></div>
<div class="t" style="left:814.5px;top:596.5px;font-size:12px;line-height:16px;transform:scaleX(0.8806);">Star Image [3D]</div>
<div class="btn" style="left:912.0px;top:593.0px;width:107.5px;height:23.0px;"></div>
<div class="t" style="left:916.2px;top:596.5px;font-size:12px;line-height:16px;transform:scaleX(0.8835);">Update Setting Items</div>
<div class="fr" style="left:796.0px;top:623.0px;width:159.0px;height:49.0px;"></div>
<div class="fl" style="left:802.0px;top:617.0px;width:134.0px;height:14.0px;"></div>
<div class="t" style="left:803.0px;top:616.3px;font-size:12px;line-height:16px;transform:scaleX(0.8929);">Measurement / View Option</div>
<div class="btn" style="left:803.5px;top:629.5px;width:72.5px;height:19.0px;"></div>
<div class="t" style="left:813.8px;top:631.0px;font-size:12px;line-height:16px;transform:scaleX(0.8760);">Show Field</div>
<div class="t" style="left:911.5px;top:629.5px;font-size:12px;line-height:16px;transform:scaleX(0.8895);">Interval</div>
<div class="ck dis" style="left:803.0px;top:653.0px;width:12.0px;height:12.0px;"></div>
<div class="t" style="left:821.5px;top:651.0px;font-size:12px;line-height:16px;color:#a0a0a0;transform:scaleX(0.8550);">Field Measure</div>
<div class="btn" style="left:895.0px;top:641.5px;width:16.0px;height:13.5px;"></div>
<svg class="a" style="left:899.2px;top:645.4px" width="7.6" height="5.3"><polygon points="1.0,4.3 6.6,4.3 3.8,1.0" fill="#000"/></svg>
<div class="btn" style="left:895.0px;top:656.0px;width:16.0px;height:14.0px;"></div>
<svg class="a" style="left:899.2px;top:660.6px" width="7.6" height="5.3"><polygon points="1.0,1.0 6.6,1.0 3.8,4.3" fill="#000"/></svg>
<div class="ed" style="left:911.5px;top:647.0px;width:36.0px;height:20.5px;"></div>
<div class="t" style="left:915.5px;top:649.2px;font-size:12px;line-height:16px;">1</div>
<div class="tog" style="left:963.0px;top:622.5px;width:56.0px;height:18.5px;"></div>
<div class="t" style="left:973.5px;top:623.5px;font-size:12px;line-height:16px;transform:scaleX(0.9048);">DShow</div>
<div class="t" style="left:961.5px;top:638.5px;font-size:12px;line-height:16px;transform:scaleX(0.8603);">Frame Rate</div>
<div class="ed" style="left:961.0px;top:652.5px;width:58.0px;height:19.5px;"></div>
<div class="t" style="left:968.0px;top:654.8px;font-size:12px;line-height:16px;transform:scaleX(0.8639);">3.0580761</div>
<div class="fr" style="left:796.0px;top:681.0px;width:80.0px;height:39.0px;"></div>
<div class="fl" style="left:802.0px;top:675.0px;width:53.0px;height:14.0px;"></div>
<div class="t" style="left:803.0px;top:674.3px;font-size:12px;line-height:16px;transform:scaleX(0.8498);">Field Order</div>
<div class="rd" style="left:804.0px;top:690.0px;width:11.0px;height:11.0px;"></div>
<div class="t" style="left:821.5px;top:687.5px;font-size:12px;line-height:16px;transform:scaleX(0.8798);">Even first</div>
<div class="rd" style="left:804.0px;top:703.0px;width:11.0px;height:11.0px;"><i></i></div>
<div class="t" style="left:821.5px;top:701.3px;font-size:12px;line-height:16px;transform:scaleX(0.8601);">Odd first</div>
<div class="btn" style="left:875.5px;top:680.0px;width:53.5px;height:40.5px;"></div>
<div class="t" style="left:885.2px;top:691.8px;font-size:13px;line-height:17px;font-weight:bold;transform:scaleX(0.8882);">Graph</div>
<div class="fr" style="left:930.0px;top:681.0px;width:89.0px;height:39.0px;"></div>
<div class="fl" style="left:936.0px;top:675.0px;width:70.0px;height:14.0px;"></div>
<div class="t" style="left:937.0px;top:674.3px;font-size:12px;line-height:16px;transform:scaleX(0.8715);">Current Object</div>
<div class="tog" style="left:933.0px;top:690.5px;width:25.0px;height:20.5px;"></div>
<div class="t" style="left:941.5px;top:692.5px;font-size:12px;line-height:16px;transform:scaleX(1.0000);">A</div>
<div class="abs" style="left:933.0px;top:712.0px;width:27.0px;height:4.0px;background:#a6caf0"></div>
<div class="btn" style="left:961.0px;top:690.5px;width:26.5px;height:20.5px;"></div>
<div class="t" style="left:970.2px;top:692.5px;font-size:12px;line-height:16px;transform:scaleX(1.0000);">B</div>
<div class="abs" style="left:961.0px;top:712.0px;width:27.0px;height:4.0px;background:#ffff00"></div>
<div class="btn" style="left:989.0px;top:690.5px;width:26.5px;height:20.5px;"></div>
<div class="t" style="left:997.9px;top:692.5px;font-size:12px;line-height:16px;transform:scaleX(1.0000);">C</div>
<div class="abs" style="left:989.0px;top:712.0px;width:27.0px;height:4.0px;background:#ff00ff"></div>
<div class="abs" style="left:11.0px;top:724.0px;width:1018.0px;height:54.0px;box-shadow:inset 0 1px 0 #fff;"></div>
<div class="t" style="left:435.0px;top:729.0px;font-size:15px;line-height:19px;font-weight:bold;transform:scaleX(0.9483);">AVI filename :</div>
<div class="ed" style="left:531.0px;top:728.0px;width:496.0px;height:19.0px;"></div>
<div class="t" style="left:534.0px;top:729.5px;line-height:16px;font-family:'Liberation Mono','Noto Sans CJK JP',monospace"><span style="font-size:11px;letter-spacing:-0.6px">I:¥A-</span><span style="font-size:12px;letter-spacing:0">えんぺい観測</span><span style="font-size:11px;letter-spacing:-0.6px">¥</span><span style="font-size:12px;letter-spacing:0">観測記録</span><span style="font-size:11px;letter-spacing:-0.6px">2025¥07-12</span><span style="font-size:12px;letter-spacing:0">月</span><span style="font-size:11px;letter-spacing:-0.6px">¥20250818</span><span style="font-size:12px;letter-spacing:0">◎</span><span style="font-size:11px;letter-spacing:-0.6px">Bogorodskij</span><span style="font-size:12px;letter-spacing:0">羽床</span><span style="font-size:11px;letter-spacing:-0.6px">¥20_34_00.avi</span></div>
<div class="t" style="left:140.0px;top:740.5px;font-size:12px;line-height:16px;font-weight:bold;transform:scaleX(0.9616);">Timing process indicator</div>
<div class="ed" style="left:19.5px;top:758.5px;width:79.0px;height:19.0px;background:#00ffff;"></div>
<div class="t" style="left:23.0px;top:760.0px;font-size:12px;line-height:16px;transform:scaleX(0.8948);">1. Time correct</div>
<div class="ed" style="left:99.5px;top:758.5px;width:87.0px;height:19.0px;background:#00ffff;"></div>
<div class="t" style="left:103.0px;top:760.0px;font-size:12px;line-height:16px;transform:scaleX(0.8853);">2. XML element</div>
<div class="ed" style="left:187.5px;top:758.5px;width:71.0px;height:19.0px;background:#00ffff;"></div>
<div class="t" style="left:191.0px;top:760.0px;font-size:12px;line-height:16px;transform:scaleX(0.9023);">3. Light curve</div>
<div class="ed" style="left:259.5px;top:758.5px;width:79.0px;height:19.0px;background:#fff;"></div>
<div class="t" style="left:263.0px;top:760.0px;font-size:12px;line-height:16px;transform:scaleX(0.8897);">4. Diffraction tit</div>
<div class="ed" style="left:339.5px;top:758.5px;width:79.0px;height:19.0px;background:#fff;"></div>
<div class="t" style="left:343.0px;top:760.0px;font-size:12px;line-height:16px;transform:scaleX(0.8919);">5. Make report</div>
<div class="t" style="left:531.5px;top:756.2px;font-size:13px;line-height:17px;transform:scaleX(1.0217);">SharpCap version:</div>
<div class="ed" style="left:651.0px;top:754.0px;width:104.0px;height:20.0px;"></div>
<div class="t" style="left:655.0px;top:755.7px;font-size:12px;line-height:16px;font-weight:bold;transform:scaleX(1.1000);">4. 1. 11251. 0</div>
<div class="t" style="left:771.0px;top:756.5px;font-size:13px;line-height:17px;transform:scaleX(1.0382);">Time stamp indicates</div>
<div class="ed" style="left:907.0px;top:754.0px;width:111.0px;height:20.0px;"></div>
<div class="t" style="left:911.0px;top:755.7px;font-size:12px;line-height:16px;font-weight:bold;transform:scaleX(0.9373);">FrameEnd</div>
<div class="win" style="left:1039px;top:15px;width:754px;height:712px;"></div>
<div class="abs" style="left:1039px;top:15px;width:754px;height:27px;background:#f3f3f3;border-radius:8px 8px 0 0"></div>
<svg class="a" style="left:1042px;top:19px" width="16" height="16" viewBox="0 0 16 16"><rect x="0" y="1" width="16" height="15" fill="#0a0ad0"/><path d="M0 0 h5 v1 h2 v-1 h9 v2 h-16z" fill="#0a0ad0"/><path d="M0 1 q2 2 4 0 v3 q-2 2 -4 0z M9 2 h6 v4 h-6z M1 12 h4 v3 h-4z M9 11 h6 v3 h-6z" fill="#000080"/><path d="M2 3h1v1h-1z M6 2h1v1h-1z M9 1h1v1h-1z M12 1h1v1h-1z M14.500 2h1v1h-1z M2 14h1v1h-1z M5 13h1v1h-1z M8 14h1v1h-1z M11 13h1v1h-1z M14 14h1v1h-1z" fill="#fff"/><path d="M0 7.300 L4 7 L5 1.500 L6 7 L16 7.300 L16 8.700 L6 9 L5 14.500 L4 9 L0 8.700 Z" fill="#ffee00"/></svg>
<div class="t" style="left:1064.0px;top:19.3px;font-size:12px;line-height:16px;color:#222;transform:scaleX(0.9596);">Graph</div>
<svg class="a" style="left:1660px;top:15px" width="133" height="25"><g stroke="#111" stroke-width="1" fill="none"><path d="M14 12.5 H24"/><rect x="59.5" y="7.5" width="9" height="9" rx="1"/><path d="M105.5 7.5 L114.5 16.5 M114.5 7.5 L105.5 16.5"/></g></svg>
<svg class="a" style="left:1047px;top:42px;background:#fff" width="740" height="425" font-family="Liberation Sans,sans-serif" font-size="11"><defs><marker id="my" markerWidth="5" markerHeight="5" refX="2.5" refY="2.5" markerUnits="userSpaceOnUse"><circle cx="2.5" cy="2.5" r="2" fill="#ffa500"/></marker><marker id="mb" markerWidth="5" markerHeight="5" refX="2.5" refY="2.5" markerUnits="userSpaceOnUse"><circle cx="2.5" cy="2.5" r="2" fill="#0000ff"/></marker><marker id="mm" markerWidth="5" markerHeight="5" refX="2.5" refY="2.5" markerUnits="userSpaceOnUse"><circle cx="2.5" cy="2.5" r="2" fill="#ff00ff"/></marker></defs><text x="8.5" y="14" font-size="12" font-weight="bold" textLength="568" lengthAdjust="spacingAndGlyphs" xml:space="preserve">2025 Aug 18; (3885) Bogorodskij occults UCAC4 362-079428 Observed by Toshihiro Horikawa</text><text x="582" y="14" font-size="12" textLength="142" lengthAdjust="spacingAndGlyphs" xml:space="preserve">/ PSF-Frame Photometry /</text><g shape-rendering="crispEdges" fill="none"><path d="M50.5 169.5 H730.0 M50.5 269.5 H730.0" stroke="#00ffff"/><path d="M50.5 370.5 H730.0" stroke="#000"/><polyline points="50.5,53.9 51.7,71.0 53.0,55.6 54.2,89.7 55.4,114.6 56.7,76.0 57.9,65.2 59.1,53.7 60.4,111.1 61.6,113.5 62.8,60.9 64.1,65.2 65.3,45.6 66.5,55.8 67.8,77.1 69.0,82.4 70.3,37.6 71.5,82.8 72.7,98.0 74.0,108.8 75.2,72.3 76.4,71.3 77.7,84.6 78.9,75.9 80.1,69.0 81.4,61.2 82.6,53.7 83.8,70.1 85.1,128.7 86.3,61.0 87.5,117.4 88.8,79.3 90.0,119.0 91.2,74.0 92.5,97.8 93.7,70.1 94.9,44.9 96.2,75.5 97.4,58.4 98.6,114.4 99.9,82.8 101.1,61.7 102.3,76.9 103.6,67.2 104.8,72.1 106.1,104.7 107.3,63.6 108.5,98.8 109.8,41.3 111.0,89.4 112.2,36.8 113.5,74.0 114.7,56.4 115.9,92.4 117.2,55.5 118.4,77.8 119.6,53.3 120.9,67.9 122.1,79.5 123.3,108.7 124.6,73.3 125.8,81.6 127.0,62.5 128.3,107.2 129.5,88.1 130.7,91.7 132.0,98.5 133.2,102.6 134.4,105.8 135.7,127.5 136.9,140.2 138.1,121.3 139.4,98.2 140.6,81.2 141.9,164.5 143.1,89.7 144.3,94.8 145.6,96.2 146.8,105.8 148.0,94.9 149.3,76.3 150.5,117.5 151.7,127.0 153.0,67.8 154.2,98.0 155.4,82.8 156.7,82.9 157.9,132.1 159.1,50.7 160.4,61.2 161.6,89.2 162.8,76.8 164.1,86.7 165.3,114.4 166.5,89.2 167.8,77.1 169.0,63.2 170.2,70.5 171.5,82.4 172.7,58.2 173.9,106.3 175.2,68.2 176.4,62.0 177.7,91.4 178.9,136.9 180.1,109.7 181.4,77.5 182.6,71.9 183.8,52.8 185.1,111.9 186.3,81.0 187.5,68.8 188.8,85.5 190.0,152.8 191.2,65.3 192.5,37.6 193.7,61.2 194.9,107.7 196.2,92.0 197.4,75.1 198.6,39.5 199.9,71.4 201.1,84.5 202.3,61.5 203.6,96.6 204.8,63.4 206.0,122.6 207.3,119.9 208.5,95.8 209.8,82.4 211.0,96.2 212.2,186.6 213.5,163.1 214.7,128.9 215.9,125.3 217.2,122.6 218.4,95.0 219.6,115.7 220.9,90.4 222.1,103.1 223.3,114.3 224.6,99.5 225.8,91.2 227.0,80.7 228.3,108.7 229.5,98.7 230.7,130.7 232.0,56.8 233.2,57.2 234.4,87.0 235.7,93.7 236.9,116.8 238.1,75.9 239.4,75.2 240.6,38.6 241.8,74.5 243.1,102.8 244.3,153.7 245.6,52.9 246.8,75.5 248.0,128.2 249.3,75.7 250.5,128.2 251.7,43.1 253.0,58.3 254.2,68.4 255.4,84.4 256.7,144.4 257.9,82.9 259.1,126.5 260.4,68.0 261.6,144.3 262.8,106.8 264.1,60.2 265.3,56.1 266.5,169.5 267.8,141.0 269.0,81.6 270.2,85.8 271.5,135.5 272.7,130.4 273.9,130.4 275.2,145.5 276.4,130.0 277.6,86.0 278.9,96.4 280.1,71.1 281.4,111.8 282.6,113.3 283.8,139.2 285.1,113.0 286.3,149.3 287.5,163.5 288.8,96.3 290.0,82.5 291.2,93.7 292.5,84.5 293.7,104.5 294.9,131.1 296.2,107.6 297.4,120.6 298.6,141.1 299.9,156.8 301.1,199.6 302.3,101.3 303.6,96.4 304.8,35.8 306.0,68.6 307.3,89.8 308.5,80.3 309.7,66.5 311.0,114.1 312.2,149.2 313.4,75.1 314.7,110.1 315.9,64.8 317.2,82.8 318.4,70.4 319.6,187.6 320.9,152.6 322.1,75.8 323.3,109.6 324.6,112.2 325.8,102.4 327.0,74.9 328.3,72.7 329.5,70.3 330.7,139.8 332.0,107.1 333.2,161.6 334.4,92.2 335.7,78.0 336.9,112.4 338.1,84.6 339.4,84.8 340.6,70.4 341.8,114.2 343.1,114.4 344.3,112.4 345.5,56.6 346.8,68.9 348.0,92.9 349.2,84.9 350.5,87.0 351.7,85.3 353.0,95.5 354.2,99.3 355.4,58.9 356.7,20.8 357.9,58.5 359.1,79.2 360.4,87.9 361.6,95.7 362.8,87.9 364.1,82.5 365.3,108.8 366.5,85.5 367.8,84.6 369.0,112.0 370.2,113.2 371.5,119.6 372.7,121.7 373.9,72.9 375.2,161.5 376.4,97.7 377.6,108.4 378.9,108.8 380.1,88.2 381.3,69.2 382.6,88.8 383.8,94.6 385.0,109.2 386.3,94.5 387.5,73.8 388.8,102.9 390.0,126.0 391.2,129.7 392.5,125.0 393.7,133.8 394.9,71.1 396.2,85.0 397.4,99.0 398.6,64.8 399.9,112.1 401.1,78.2 402.3,77.4 403.6,139.6 404.8,140.0 406.0,120.9 407.3,75.9 408.5,68.8 409.7,130.5 411.0,73.7 412.2,104.9 413.4,105.4 414.7,110.3 415.9,103.5 417.1,149.3 418.4,181.6 419.6,131.7 420.8,85.0 422.1,55.5 423.3,43.8 424.6,104.8 425.8,147.2 427.0,107.3 428.3,123.7 429.5,58.4 430.7,84.7 432.0,117.7 433.2,78.2 434.4,85.8 435.7,145.5 436.9,112.2 438.1,103.4 439.4,95.9 440.6,94.0 441.8,106.9 443.1,93.2 444.3,114.7 445.5,124.4 446.8,69.0 448.0,90.6 449.2,89.3 450.5,146.3 451.7,102.8 452.9,82.7 454.2,137.4 455.4,77.8 456.7,110.2 457.9,91.0 459.1,102.6 460.4,94.7 461.6,76.5 462.8,111.3 464.1,70.1 465.3,125.5 466.5,132.6 467.8,93.5 469.0,141.7 470.2,123.0 471.5,97.4 472.7,94.3 473.9,173.4 475.2,112.4 476.4,89.3 477.6,101.8 478.9,130.9 480.1,141.6 481.3,132.0 482.6,157.8 483.8,130.3 485.0,127.6 486.3,126.0 487.5,99.3 488.7,167.5 490.0,174.5 491.2,100.8 492.5,152.7 493.7,133.2 494.9,123.3 496.2,127.2 497.4,144.8 498.6,119.3 499.9,68.7 501.1,125.2 502.3,108.3 503.6,80.8 504.8,85.3 506.0,82.5 507.3,78.1 508.5,154.3 509.7,120.7 511.0,92.0 512.2,85.3 513.4,70.6 514.7,86.0 515.9,102.1 517.1,94.2 518.4,101.5 519.6,90.5 520.8,82.7 522.1,105.7 523.3,120.3 524.5,121.6 525.8,75.3 527.0,72.0 528.3,77.4 529.5,80.0 530.7,80.6 532.0,96.2 533.2,83.9 534.4,128.5 535.7,102.6 536.9,118.9 538.1,83.2 539.4,114.4 540.6,100.1 541.8,89.5 543.1,71.9 544.3,121.3 545.5,169.5 546.8,82.2 548.0,131.2 549.2,89.2 550.5,115.0 551.7,101.0 552.9,153.4 554.2,84.7 555.4,113.3 556.6,125.6 557.9,59.7 559.1,85.1 560.3,44.0 561.6,91.0 562.8,109.3 564.1,96.8 565.3,69.1 566.5,99.8 567.8,90.7 569.0,89.6 570.2,128.8 571.5,100.5 572.7,120.2 573.9,144.7 575.2,92.4 576.4,98.1 577.6,111.0 578.9,171.5 580.1,174.6 581.3,103.5 582.6,114.7 583.8,162.3 585.0,111.9 586.3,155.6 587.5,109.2 588.7,104.9 590.0,100.1 591.2,101.8 592.4,101.8 593.7,139.0 594.9,112.9 596.1,113.8 597.4,102.3 598.6,87.1 599.9,77.6 601.1,55.8 602.3,161.5 603.6,72.6 604.8,83.1 606.0,39.5 607.3,56.7 608.5,124.4 609.7,66.4 611.0,89.7 612.2,55.4 613.4,106.0 614.7,76.8 615.9,77.7 617.1,76.6 618.4,91.4 619.6,129.6 620.8,64.9 622.1,54.9 623.3,75.5 624.5,104.4 625.8,69.5 627.0,62.8 628.2,78.6 629.5,73.6 630.7,47.0 631.9,107.2 633.2,90.0 634.4,131.1 635.7,94.3 636.9,95.4 638.1,102.1 639.4,94.0 640.6,39.4 641.8,78.7 643.1,76.1 644.3,36.7 645.5,74.4 646.8,125.4 648.0,65.0 649.2,101.0 650.5,42.0 651.7,110.3 652.9,90.0 654.2,121.2 655.4,70.4 656.6,103.1 657.9,74.1 659.1,83.5 660.3,90.7 661.6,54.4 662.8,54.5 664.0,70.7 665.3,99.3 666.5,104.4 667.8,66.7 669.0,44.0 670.2,85.6 671.5,95.5 672.7,92.8 673.9,104.9 675.2,20.8 676.4,53.9 677.6,44.7 678.9,71.3 680.1,86.8 681.3,120.5 682.6,67.2 683.8,71.9 685.0,108.5 686.3,104.2 687.5,75.1 688.7,57.9 690.0,67.8 691.2,78.5 692.4,94.9 693.7,82.0 694.9,91.1 696.1,53.2 697.4,130.9 698.6,110.4 699.8,75.6 701.1,107.3 702.3,72.7 703.6,100.5 704.8,96.5 706.0,110.5 707.3,141.3 708.5,128.8 709.7,58.1 711.0,87.2 712.2,87.9 713.4,81.5 714.7,88.6 715.9,80.2 717.1,107.3 718.4,106.0 719.6,80.9 720.8,109.9 722.1,139.8 723.3,106.0 724.5,115.8 725.8,87.8 727.0,121.1 728.2,131.5 729.5,109.3" stroke="#ffff00" stroke-width="1" marker-start="url(#my)" marker-mid="url(#my)" marker-end="url(#my)"/><polyline points="50.5,270.0 51.7,290.5 53.0,263.8 54.2,274.6 55.4,286.0 56.7,280.2 57.9,279.1 59.1,271.2 60.4,262.1 61.6,250.3 62.8,265.4 64.1,248.8 65.3,261.1 66.5,267.6 67.8,273.6 69.0,287.5 70.3,298.7 71.5,270.8 72.7,272.4 74.0,263.3 75.2,263.1 76.4,292.3 77.7,282.2 78.9,289.6 80.1,250.5 81.4,270.9 82.6,266.5 83.8,285.3 85.1,292.0 86.3,279.3 87.5,270.4 88.8,259.9 90.0,296.3 91.2,262.2 92.5,284.0 93.7,277.7 94.9,274.1 96.2,275.8 97.4,259.4 98.6,251.6 99.9,261.4 101.1,277.5 102.3,259.8 103.6,260.5 104.8,251.5 106.1,262.3 107.3,296.7 108.5,280.9 109.8,274.3 111.0,249.9 112.2,209.7 113.5,249.9 114.7,261.2 115.9,288.3 117.2,265.5 118.4,256.1 119.6,261.7 120.9,299.2 122.1,267.1 123.3,288.5 124.6,319.3 125.8,293.9 127.0,322.5 128.3,309.7 129.5,260.0 130.7,241.2 132.0,267.0 133.2,278.4 134.4,251.6 135.7,280.1 136.9,304.4 138.1,331.4 139.4,269.7 140.6,327.7 141.9,338.9 143.1,298.4 144.3,285.2 145.6,302.2 146.8,267.2 148.0,288.0 149.3,282.5 150.5,278.2 151.7,297.1 153.0,282.5 154.2,243.4 155.4,303.5 156.7,280.4 157.9,270.8 159.1,287.6 160.4,275.6 161.6,303.5 162.8,277.1 164.1,265.3 165.3,245.5 166.5,248.6 167.8,276.7 169.0,286.6 170.2,232.2 171.5,249.6 172.7,301.3 173.9,272.3 175.2,282.7 176.4,277.2 177.7,297.7 178.9,273.8 180.1,275.5 181.4,270.3 182.6,246.7 183.8,261.8 185.1,288.5 186.3,298.1 187.5,275.7 188.8,244.6 190.0,248.4 191.2,276.8 192.5,244.3 193.7,257.8 194.9,277.1 196.2,257.8 197.4,271.4 198.6,294.8 199.9,286.4 201.1,279.5 202.3,262.2 203.6,310.1 204.8,286.3 206.0,290.2 207.3,291.3 208.5,332.3 209.8,266.7 211.0,265.9 212.2,260.1 213.5,281.0 214.7,262.0 215.9,279.4 217.2,270.7 218.4,295.4 219.6,284.9 220.9,295.0 222.1,308.4 223.3,296.7 224.6,307.9 225.8,306.2 227.0,291.1 228.3,293.4 229.5,242.0 230.7,245.9 232.0,257.2 233.2,261.0 234.4,290.1 235.7,267.3 236.9,299.4 238.1,284.2 239.4,281.5 240.6,279.3 241.8,256.4 243.1,287.2 244.3,227.4 245.6,282.0 246.8,256.5 248.0,302.0 249.3,255.4 250.5,295.4 251.7,268.7 253.0,272.5 254.2,257.0 255.4,261.0 256.7,265.1 257.9,275.2 259.1,235.8 260.4,281.0 261.6,272.1 262.8,281.2 264.1,269.8 265.3,290.4 266.5,280.1 267.8,262.9 269.0,283.2 270.2,263.7 271.5,283.3 272.7,245.8 273.9,274.9 275.2,239.5 276.4,263.1 277.6,274.8 278.9,254.6 280.1,250.6 281.4,243.8 282.6,246.3 283.8,255.6 285.1,294.2 286.3,254.9 287.5,274.0 288.8,264.8 290.0,248.7 291.2,285.8 292.5,247.4 293.7,227.5 294.9,262.0 296.2,278.2 297.4,246.6 298.6,269.0 299.9,252.7 301.1,248.9 302.3,300.7 303.6,266.3 304.8,300.9 306.0,285.6 307.3,261.0 308.5,294.8 309.7,285.9 311.0,281.0 312.2,266.6 313.4,265.9 314.7,264.1 315.9,281.9 317.2,286.5 318.4,264.8 319.6,288.8 320.9,287.7 322.1,259.4 323.3,287.4 324.6,289.5 325.8,251.4 327.0,273.4 328.3,314.4 329.5,286.7 330.7,236.1 332.0,219.5 333.2,278.2 334.4,259.5 335.7,258.8 336.9,266.7 338.1,306.7 339.4,253.9 340.6,267.4 341.8,277.1 343.1,302.9 344.3,284.5 345.5,274.8 346.8,277.4 348.0,268.5 349.2,280.0 350.5,254.2 351.7,261.2 353.0,294.5 354.2,284.3 355.4,265.2 356.7,283.5 357.9,247.0 359.1,283.3 360.4,268.7 361.6,262.0 362.8,294.6 364.1,250.1 365.3,277.4 366.5,286.9 367.8,286.6 369.0,305.3 370.2,299.2 371.5,245.9 372.7,276.3 373.9,279.2 375.2,270.3 376.4,263.3 377.6,288.9 378.9,278.0 380.1,269.1 381.3,255.3 382.6,269.5 383.8,243.4 385.0,278.4 386.3,280.7 387.5,300.4 388.8,275.3 390.0,262.6 391.2,279.2 392.5,277.9 393.7,292.9 394.9,285.7 396.2,283.1 397.4,276.6 398.6,254.9 399.9,265.5 401.1,258.0 402.3,253.2 403.6,283.8 404.8,250.3 406.0,274.4 407.3,299.9 408.5,286.6 409.7,277.0 411.0,304.1 412.2,232.6 413.4,276.5 414.7,259.7 415.9,298.2 417.1,273.9 418.4,271.0 419.6,290.0 420.8,271.2 422.1,276.3 423.3,269.7 424.6,299.5 425.8,267.7 427.0,283.0 428.3,293.9 429.5,319.3 430.7,282.4 432.0,286.1 433.2,235.3 434.4,302.3 435.7,252.5 436.9,257.3 438.1,273.2 439.4,318.2 440.6,357.4 441.8,309.5 443.1,256.0 444.3,288.7 445.5,219.8 446.8,283.1 448.0,334.1 449.2,307.5 450.5,304.7 451.7,312.0 452.9,271.8 454.2,252.9 455.4,282.3 456.7,288.5 457.9,276.5 459.1,291.8 460.4,279.9 461.6,274.7 462.8,286.5 464.1,289.8 465.3,280.8 466.5,280.9 467.8,269.4 469.0,310.0 470.2,302.7 471.5,290.9 472.7,272.7 473.9,305.8 475.2,259.2 476.4,254.9 477.6,295.3 478.9,260.7 480.1,320.3 481.3,283.3 482.6,311.3 483.8,260.6 485.0,264.1 486.3,269.5 487.5,289.1 488.7,298.5 490.0,268.9 491.2,285.5 492.5,262.6 493.7,304.0 494.9,265.7 496.2,264.0 497.4,315.9 498.6,297.3 499.9,286.9 501.1,284.9 502.3,305.8 503.6,273.5 504.8,294.8 506.0,275.2 507.3,307.9 508.5,295.9 509.7,260.9 511.0,305.8 512.2,274.6 513.4,217.7 514.7,258.9 515.9,298.5 517.1,232.6 518.4,284.3 519.6,256.6 520.8,256.1 522.1,279.9 523.3,262.2 524.5,226.8 525.8,272.3 527.0,273.9 528.3,286.2 529.5,280.4 530.7,265.6 532.0,270.9 533.2,302.9 534.4,279.5 535.7,272.3 536.9,292.0 538.1,286.9 539.4,339.7 540.6,323.4 541.8,287.2 543.1,322.1 544.3,278.4 545.5,272.6 546.8,312.6 548.0,315.9 549.2,297.9 550.5,290.1 551.7,279.0 552.9,298.5 554.2,293.6 555.4,312.8 556.6,289.0 557.9,308.7 559.1,275.7 560.3,281.3 561.6,324.8 562.8,288.0 564.1,314.8 565.3,276.4 566.5,313.6 567.8,270.9 569.0,274.6 570.2,258.1 571.5,288.3 572.7,293.5 573.9,271.8 575.2,317.2 576.4,295.2 577.6,300.3 578.9,295.5 580.1,323.9 581.3,325.7 582.6,326.2 583.8,267.2 585.0,300.7 586.3,282.9 587.5,296.8 588.7,298.9 590.0,270.3 591.2,337.6 592.4,298.6 593.7,309.1 594.9,311.6 596.1,337.3 597.4,323.1 598.6,316.8 599.9,274.3 601.1,300.9 602.3,290.4 603.6,278.5 604.8,257.3 606.0,243.2 607.3,258.8 608.5,262.3 609.7,252.7 611.0,277.2 612.2,258.4 613.4,231.0 614.7,274.5 615.9,278.3 617.1,291.0 618.4,261.4 619.6,250.8 620.8,270.3 622.1,268.4 623.3,240.5 624.5,261.8 625.8,249.4 627.0,269.1 628.2,238.2 629.5,245.4 630.7,265.0 631.9,273.3 633.2,215.1 634.4,282.1 635.7,217.7 636.9,308.4 638.1,249.5 639.4,261.1 640.6,263.7 641.8,290.5 643.1,261.9 644.3,276.8 645.5,283.8 646.8,266.6 648.0,256.4 649.2,264.8 650.5,271.4 651.7,248.5 652.9,257.6 654.2,268.9 655.4,251.4 656.6,256.5 657.9,245.1 659.1,246.7 660.3,248.4 661.6,273.0 662.8,212.7 664.0,243.5 665.3,272.0 666.5,238.9 667.8,260.3 669.0,282.7 670.2,267.2 671.5,292.4 672.7,250.2 673.9,296.5 675.2,248.5 676.4,293.7 677.6,282.5 678.9,256.3 680.1,273.1 681.3,309.8 682.6,281.7 683.8,312.7 685.0,266.5 686.3,297.5 687.5,280.2 688.7,280.7 690.0,305.9 691.2,271.9 692.4,245.0 693.7,294.4 694.9,288.0 696.1,270.4 697.4,254.7 698.6,292.9 699.8,272.5 701.1,268.9 702.3,255.4 703.6,289.3 704.8,228.1 706.0,235.2 707.3,297.1 708.5,286.0 709.7,264.0 711.0,281.7 712.2,279.0 713.4,268.6 714.7,281.4 715.9,278.5 717.1,262.7 718.4,274.9 719.6,261.9 720.8,250.3 722.1,250.0 723.3,269.8 724.5,234.8 725.8,280.7 727.0,258.1 728.2,242.3 729.5,272.9" stroke="#8080ff" stroke-width="1" marker-start="url(#mb)" marker-mid="url(#mb)" marker-end="url(#mb)"/><polyline points="50.5,365.4 51.7,366.6 53.0,371.9 54.2,371.2 55.4,361.3 56.7,369.9 57.9,367.9 59.1,368.2 60.4,366.9 61.6,364.9 62.8,367.4 64.1,370.9 65.3,365.5 66.5,359.5 67.8,365.0 69.0,370.1 70.3,351.0 71.5,368.0 72.7,363.3 74.0,366.4 75.2,360.6 76.4,362.5 77.7,369.7 78.9,358.2 80.1,361.4 81.4,370.4 82.6,368.9 83.8,369.7 85.1,358.2 86.3,363.1 87.5,363.3 88.8,359.2 90.0,356.9 91.2,364.1 92.5,362.8 93.7,365.6 94.9,365.5 96.2,365.1 97.4,366.3 98.6,362.0 99.9,359.1 101.1,371.0 102.3,361.6 103.6,366.7 104.8,366.1 106.1,372.5 107.3,376.1 108.5,365.3 109.8,367.5 111.0,367.5 112.2,365.7 113.5,370.4 114.7,362.8 115.9,357.5 117.2,359.1 118.4,362.8 119.6,364.9 120.9,364.7 122.1,365.9 123.3,366.3 124.6,367.3 125.8,368.4 127.0,344.9 128.3,360.9 129.5,361.7 130.7,363.3 132.0,368.4 133.2,364.7 134.4,370.3 135.7,365.7 136.9,370.3 138.1,367.6 139.4,365.5 140.6,361.1 141.9,366.4 143.1,369.7 144.3,376.1 145.6,366.0 146.8,360.3 148.0,364.3 149.3,366.1 150.5,365.2 151.7,364.4 153.0,369.8 154.2,365.9 155.4,361.4 156.7,363.0 157.9,364.9 159.1,361.0 160.4,371.9 161.6,358.1 162.8,369.4 164.1,368.3 165.3,359.1 166.5,363.2 167.8,365.3 169.0,360.0 170.2,370.9 171.5,360.1 172.7,351.7 173.9,364.7 175.2,364.1 176.4,365.3 177.7,358.3 178.9,357.7 180.1,363.4 181.4,369.0 182.6,363.0 183.8,364.3 185.1,371.8 186.3,354.3 187.5,366.9 188.8,356.8 190.0,373.9 191.2,361.0 192.5,369.5 193.7,359.4 194.9,362.2 196.2,374.7 197.4,374.0 198.6,368.5 199.9,370.2 201.1,358.1 202.3,360.7 203.6,361.8 204.8,363.9 206.0,356.4 207.3,362.3 208.5,358.0 209.8,367.1 211.0,357.3 212.2,360.1 213.5,360.8 214.7,357.3 215.9,370.2 217.2,375.9 218.4,362.7 219.6,361.3 220.9,365.5 222.1,362.7 223.3,357.7 224.6,367.1 225.8,359.9 227.0,360.9 228.3,353.7 229.5,356.8 230.7,364.8 232.0,364.3 233.2,364.9 234.4,369.3 235.7,370.0 236.9,372.0 238.1,358.8 239.4,361.6 240.6,361.0 241.8,365.8 243.1,364.6 244.3,356.8 245.6,355.6 246.8,361.2 248.0,360.6 249.3,376.6 250.5,361.2 251.7,370.6 253.0,370.9 254.2,363.0 255.4,374.0 256.7,375.4 257.9,361.1 259.1,359.6 260.4,368.4 261.6,363.4 262.8,359.9 264.1,356.8 265.3,371.5 266.5,368.7 267.8,364.9 269.0,358.7 270.2,363.0 271.5,362.1 272.7,359.6 273.9,359.0 275.2,360.7 276.4,370.2 277.6,364.2 278.9,366.7 280.1,367.5 281.4,365.0 282.6,368.5 283.8,365.3 285.1,364.9 286.3,352.9 287.5,368.4 288.8,365.8 290.0,368.9 291.2,364.4 292.5,363.2 293.7,369.7 294.9,360.8 296.2,370.5 297.4,368.8 298.6,370.5 299.9,366.3 301.1,365.6 302.3,362.8 303.6,371.6 304.8,363.7 306.0,358.6 307.3,357.4 308.5,367.0 309.7,370.7 311.0,366.7 312.2,359.1 313.4,362.1 314.7,371.5 315.9,361.6 317.2,366.6 318.4,362.4 319.6,362.4 320.9,367.9 322.1,363.8 323.3,359.1 324.6,357.1 325.8,367.5 327.0,363.2 328.3,362.9 329.5,366.5 330.7,364.7 332.0,364.3 333.2,362.1 334.4,357.5 335.7,372.9 336.9,359.5 338.1,370.3 339.4,360.6 340.6,363.7 341.8,364.0 343.1,366.0 344.3,374.0 345.5,364.6 346.8,364.9 348.0,359.9 349.2,369.7 350.5,370.4 351.7,359.4 353.0,357.1 354.2,362.0 355.4,363.2 356.7,366.1 357.9,361.5 359.1,369.4 360.4,363.4 361.6,366.1 362.8,374.2 364.1,363.3 365.3,374.9 366.5,364.8 367.8,357.1 369.0,362.3 370.2,374.4 371.5,374.5 372.7,359.4 373.9,371.7 375.2,356.2 376.4,365.6 377.6,366.4 378.9,356.9 380.1,369.2 381.3,377.3 382.6,368.4 383.8,357.6 385.0,370.9 386.3,364.0 387.5,373.0 388.8,359.6 390.0,360.1 391.2,358.5 392.5,364.5 393.7,360.9 394.9,357.5 396.2,361.7 397.4,366.5 398.6,368.7 399.9,366.3 401.1,358.7 402.3,365.6 403.6,361.3 404.8,358.1 406.0,370.9 407.3,363.4 408.5,367.6 409.7,363.8 411.0,359.5 412.2,359.9 413.4,361.2 414.7,361.0 415.9,373.2 417.1,368.4 418.4,361.9 419.6,360.5 420.8,361.8 422.1,362.2 423.3,356.5 424.6,366.5 425.8,351.2 427.0,358.6 428.3,368.2 429.5,358.9 430.7,363.8 432.0,368.3 433.2,365.8 434.4,360.3 435.7,376.0 436.9,372.9 438.1,357.1 439.4,353.2 440.6,370.0 441.8,367.4 443.1,357.3 444.3,361.1 445.5,385.6 446.8,360.1 448.0,366.0 449.2,355.2 450.5,364.7 451.7,369.8 452.9,366.4 454.2,358.2 455.4,370.0 456.7,363.6 457.9,360.0 459.1,365.0 460.4,369.8 461.6,357.8 462.8,368.6 464.1,363.4 465.3,367.0 466.5,363.5 467.8,359.9 469.0,356.5 470.2,370.4 471.5,363.6 472.7,368.0 473.9,363.8 475.2,364.2 476.4,364.2 477.6,368.5 478.9,367.2 480.1,366.9 481.3,368.8 482.6,362.5 483.8,376.6 485.0,369.8 486.3,359.6 487.5,361.3 488.7,358.7 490.0,366.0 491.2,359.2 492.5,360.1 493.7,374.3 494.9,371.6 496.2,360.8 497.4,369.7 498.6,366.4 499.9,363.3 501.1,363.9 502.3,361.5 503.6,360.5 504.8,365.7 506.0,361.6 507.3,366.1 508.5,360.2 509.7,364.2 511.0,374.2 512.2,363.0 513.4,371.3 514.7,355.4 515.9,362.2 517.1,364.2 518.4,367.3 519.6,364.5 520.8,359.1 522.1,360.8 523.3,348.6 524.5,369.5 525.8,369.8 527.0,364.7 528.3,359.6 529.5,373.4 530.7,367.5 532.0,367.8 533.2,360.2 534.4,367.9 535.7,359.6 536.9,366.5 538.1,361.3 539.4,375.3 540.6,369.1 541.8,352.8 543.1,368.5 544.3,372.7 545.5,354.5 546.8,362.1 548.0,361.8 549.2,363.1 550.5,357.7 551.7,365.0 552.9,360.5 554.2,359.0 555.4,359.3 556.6,368.8 557.9,369.1 559.1,372.6 560.3,372.1 561.6,361.3 562.8,365.8 564.1,360.5 565.3,370.6 566.5,365.5 567.8,367.7 569.0,359.9 570.2,365.9 571.5,382.6 572.7,361.3 573.9,368.7 575.2,357.4 576.4,371.3 577.6,372.1 578.9,358.5 580.1,371.5 581.3,369.1 582.6,360.3 583.8,373.0 585.0,364.8 586.3,370.2 587.5,369.3 588.7,368.0 590.0,359.7 591.2,371.8 592.4,358.8 593.7,357.3 594.9,367.0 596.1,367.4 597.4,361.7 598.6,352.3 599.9,366.8 601.1,359.2 602.3,374.2 603.6,373.1 604.8,367.4 606.0,366.4 607.3,364.9 608.5,379.4 609.7,368.5 611.0,370.5 612.2,359.4 613.4,359.6 614.7,359.3 615.9,374.9 617.1,355.0 618.4,372.8 619.6,366.1 620.8,367.1 622.1,360.7 623.3,363.4 624.5,370.9 625.8,372.6 627.0,372.5 628.2,361.1 629.5,361.8 630.7,359.0 631.9,369.7 633.2,362.5 634.4,371.8 635.7,365.2 636.9,367.0 638.1,357.9 639.4,359.4 640.6,365.5 641.8,369.4 643.1,375.0 644.3,361.7 645.5,361.8 646.8,367.2 648.0,349.2 649.2,366.2 650.5,368.8 651.7,359.9 652.9,362.2 654.2,360.1 655.4,363.6 656.6,360.9 657.9,371.1 659.1,372.6 660.3,377.6 661.6,357.8 662.8,358.4 664.0,360.5 665.3,362.3 666.5,365.0 667.8,363.8 669.0,359.3 670.2,364.5 671.5,354.5 672.7,365.4 673.9,365.0 675.2,367.4 676.4,360.2 677.6,367.4 678.9,367.5 680.1,364.0 681.3,370.3 682.6,369.8 683.8,384.6 685.0,363.1 686.3,365.8 687.5,365.6 688.7,374.8 690.0,363.7 691.2,365.3 692.4,363.6 693.7,360.3 694.9,359.7 696.1,370.8 697.4,372.4 698.6,363.9 699.8,375.7 701.1,365.9 702.3,370.3 703.6,364.0 704.8,361.3 706.0,357.6 707.3,360.4 708.5,361.3 709.7,360.0 711.0,361.3 712.2,370.9 713.4,373.2 714.7,371.9 715.9,369.3 717.1,362.0 718.4,360.8 719.6,358.6 720.8,351.4 722.1,369.2 723.3,360.2 724.5,351.9 725.8,361.4 727.0,363.1 728.2,367.8 729.5,361.0" stroke="#ff80ff" stroke-width="1" marker-start="url(#mm)" marker-mid="url(#mm)" marker-end="url(#mm)"/><path d="M50.5 20.0 V385.5 H730.0" stroke="#000"/><path d="M50.5 385.5 v4 M62.5 385.5 v4 M75.5 385.5 v4 M87.5 385.5 v4 M99.5 385.5 v4 M112.5 385.5 v4 M124.5 385.5 v4 M136.5 385.5 v4 M149.5 385.5 v4 M161.5 385.5 v4 M173.5 385.5 v4 M186.5 385.5 v4 M198.5 385.5 v4 M210.5 385.5 v4 M223.5 385.5 v4 M235.5 385.5 v4 M248.5 385.5 v4 M260.5 385.5 v4 M272.5 385.5 v4 M285.5 385.5 v4 M297.5 385.5 v4 M309.5 385.5 v4 M322.5 385.5 v4 M334.5 385.5 v4 M346.5 385.5 v4 M359.5 385.5 v4 M371.5 385.5 v4 M383.5 385.5 v4 M396.5 385.5 v4 M408.5 385.5 v4 M420.5 385.5 v4 M433.5 385.5 v4 M445.5 385.5 v4 M457.5 385.5 v4 M470.5 385.5 v4 M482.5 385.5 v4 M494.5 385.5 v4 M507.5 385.5 v4 M519.5 385.5 v4 M531.5 385.5 v4 M544.5 385.5 v4 M556.5 385.5 v4 M568.5 385.5 v4 M581.5 385.5 v4 M593.5 385.5 v4 M606.5 385.5 v4 M618.5 385.5 v4 M630.5 385.5 v4 M643.5 385.5 v4 M655.5 385.5 v4 M667.5 385.5 v4 M680.5 385.5 v4 M692.5 385.5 v4 M704.5 385.5 v4 M717.5 385.5 v4 M729.5 385.5 v4 " stroke="#000"/></g><text x="50.8" y="399.5" textLength="4.5" lengthAdjust="spacingAndGlyphs">0</text><text x="84.6" y="399.5" textLength="9.6" lengthAdjust="spacingAndGlyphs">30</text><text x="121.7" y="399.5" textLength="9.6" lengthAdjust="spacingAndGlyphs">60</text><text x="158.7" y="399.5" textLength="9.6" lengthAdjust="spacingAndGlyphs">90</text><text x="192.5" y="399.5" textLength="14.7" lengthAdjust="spacingAndGlyphs">120</text><text x="229.6" y="399.5" textLength="14.7" lengthAdjust="spacingAndGlyphs">150</text><text x="266.6" y="399.5" textLength="14.7" lengthAdjust="spacingAndGlyphs">180</text><text x="303.6" y="399.5" textLength="14.7" lengthAdjust="spacingAndGlyphs">210</text><text x="340.7" y="399.5" textLength="14.7" lengthAdjust="spacingAndGlyphs">240</text><text x="377.7" y="399.5" textLength="14.7" lengthAdjust="spacingAndGlyphs">270</text><text x="414.8" y="399.5" textLength="14.7" lengthAdjust="spacingAndGlyphs">300</text><text x="451.8" y="399.5" textLength="14.7" lengthAdjust="spacingAndGlyphs">330</text><text x="488.8" y="399.5" textLength="14.7" lengthAdjust="spacingAndGlyphs">360</text><text x="525.9" y="399.5" textLength="14.7" lengthAdjust="spacingAndGlyphs">390</text><text x="562.9" y="399.5" textLength="14.7" lengthAdjust="spacingAndGlyphs">420</text><text x="599.9" y="399.5" textLength="14.7" lengthAdjust="spacingAndGlyphs">450</text><text x="637.0" y="399.5" textLength="14.7" lengthAdjust="spacingAndGlyphs">480</text><text x="674.0" y="399.5" textLength="14.7" lengthAdjust="spacingAndGlyphs">510</text><text x="711.0" y="399.5" textLength="14.7" lengthAdjust="spacingAndGlyphs">540</text><text x="39.5" y="171.0" text-anchor="end" textLength="23" lengthAdjust="spacingAndGlyphs">2000</text><text x="39.5" y="270.0" text-anchor="end" textLength="23" lengthAdjust="spacingAndGlyphs">1000</text><text x="47.5" y="371.0" text-anchor="end">0</text></svg>
<div class="abs" style="left:1040.0px;top:471.5px;width:752.0px;height:131.5px;box-shadow:inset 0 1px 0 #fff,inset 0 -1px 0 #a0a0a0;"></div>
<div class="t" style="left:1046.5px;top:475.0px;font-size:12px;line-height:16px;transform:scaleX(0.9885);">Current-</div>
<div class="t" style="left:1055.5px;top:491.0px;font-size:12px;line-height:16px;transform:scaleX(0.8798);">Frame</div>
<div class="t" style="left:1107.0px;top:475.0px;font-size:12px;line-height:16px;transform:scaleX(0.9034);">Luminous</div>
<div class="t" style="left:1107.0px;top:491.0px;font-size:12px;line-height:16px;transform:scaleX(0.9623);">Intensity</div>
<div class="ed" style="left:1047.0px;top:509.0px;width:48.0px;height:19.0px;"></div>
<div class="ed" style="left:1103.0px;top:509.0px;width:56.0px;height:19.0px;"></div>
<div class="abs" style="left:1166.0px;top:479.0px;width:160.0px;height:18.0px;background:#f8f8f8;box-shadow:inset 0 1px 0 #a0a0a0;"></div>
<div class="btn" style="left:1166.0px;top:480.0px;width:17.0px;height:17.0px;"></div>
<svg class="a" style="left:1170.8px;top:484.0px" width="6.0" height="9.0"><polygon points="5.0,1.0 5.0,8.0 1.0,4.5" fill="#000"/></svg>
<div class="btn" style="left:1309.0px;top:480.0px;width:17.0px;height:17.0px;"></div>
<svg class="a" style="left:1315.2px;top:484.0px" width="6.0" height="9.0"><polygon points="1.0,1.0 1.0,8.0 5.0,4.5" fill="#000"/></svg>
<div class="abs" style="left:1184.0px;top:481.0px;width:16.0px;height:15.0px;background:#888;background-image:repeating-conic-gradient(#9a9a9a 0% 25%, #6e6e6e 0% 50%);background-size:2px 2px;"></div>
<div class="t" style="left:1332.5px;top:482.5px;font-size:12px;line-height:16px;transform:scaleX(0.9162);">Scale</div>
<div class="ed" style="left:1372.0px;top:477.0px;width:20.5px;height:19.0px;"></div>
<div class="t" style="left:1375.0px;top:478.5px;font-size:12px;line-height:16px;">1</div>
<div class="btn" style="left:1395.0px;top:476.5px;width:17.0px;height:11.5px;"></div>
<svg class="a" style="left:1399.7px;top:479.4px" width="7.6" height="5.3"><polygon points="1.0,4.3 6.6,4.3 3.8,1.0" fill="#000"/></svg>
<div class="btn" style="left:1395.0px;top:488.5px;width:17.0px;height:11.0px;"></div>
<svg class="a" style="left:1399.7px;top:491.6px" width="7.6" height="5.3"><polygon points="1.0,1.0 6.6,1.0 3.8,4.3" fill="#000"/></svg>
<div class="btn" style="left:1167.0px;top:504.0px;width:41.0px;height:25.0px;"></div>
<div class="t" style="left:1171.0px;top:508.5px;font-size:12px;line-height:16px;transform:scaleX(0.8680);">-10Sec</div>
<div class="btn" style="left:1211.0px;top:504.0px;width:33.0px;height:25.0px;"></div>
<div class="t" style="left:1214.0px;top:508.5px;font-size:12px;line-height:16px;transform:scaleX(0.8613);">-1Sec</div>
<div class="btn" style="left:1247.0px;top:504.0px;width:35.0px;height:25.0px;"></div>
<div class="t" style="left:1249.5px;top:508.5px;font-size:12px;line-height:16px;transform:scaleX(0.8731);">+1Sec</div>
<div class="btn" style="left:1285.0px;top:504.0px;width:41.0px;height:25.0px;"></div>
<div class="t" style="left:1287.0px;top:508.5px;font-size:12px;line-height:16px;transform:scaleX(0.9017);">+10Sec</div>
<div class="t" style="left:1335.5px;top:507.0px;font-size:12px;line-height:16px;transform:scaleX(0.8969);">Radius</div>
<div class="ed" style="left:1372.0px;top:509.0px;width:20.5px;height:19.0px;"></div>
<div class="t" style="left:1375.0px;top:510.5px;font-size:12px;line-height:16px;">2</div>
<div class="btn" style="left:1395.0px;top:508.5px;width:17.0px;height:11.5px;"></div>
<svg class="a" style="left:1399.7px;top:511.4px" width="7.6" height="5.3"><polygon points="1.0,4.3 6.6,4.3 3.8,1.0" fill="#000"/></svg>
<div class="btn" style="left:1395.0px;top:520.5px;width:17.0px;height:11.0px;"></div>
<svg class="a" style="left:1399.7px;top:523.6px" width="7.6" height="5.3"><polygon points="1.0,1.0 6.6,1.0 3.8,4.3" fill="#000"/></svg>
<div class="ck" style="left:1047.0px;top:538.0px;width:12.0px;height:12.0px;"><svg width="12" height="12" viewBox="0 0 12 12" style="position:absolute;left:0;top:0"><path d="M2.5 5 L4.5 7 L9.5 2 L9.5 5 L4.5 10 L2.5 8 Z" fill="#000"/></svg></div>
<div class="t" style="left:1064.5px;top:536.0px;font-size:12px;line-height:16px;transform:scaleX(0.9568);">Show Image of Clicked point</div>
<div class="ck" style="left:1047.0px;top:555.0px;width:12.0px;height:12.0px;"></div>
<div class="t" style="left:1065.5px;top:552.0px;font-size:12px;line-height:16px;transform:scaleX(0.9484);">Reproduce Aperture Position</div>
<div class="btn" style="left:1221.0px;top:536.5px;width:73.0px;height:24.5px;"></div>
<div class="t" style="left:1228.0px;top:540.8px;font-size:12px;line-height:16px;transform:scaleX(0.9214);">Save Image</div>
<div class="btn" style="left:1299.0px;top:536.5px;width:119.0px;height:24.5px;"></div>
<div class="t" style="left:1311.5px;top:540.8px;font-size:12px;line-height:16px;transform:scaleX(0.9653);">Copy to ClipBoard</div>
<div class="fr" style="left:1418.0px;top:478.5px;width:48.0px;height:81.0px;"></div>
<div class="fl" style="left:1424.5px;top:472.5px;width:34.5px;height:14.0px;"></div>
<div class="t" style="left:1425.5px;top:471.8px;font-size:12px;line-height:16px;transform:scaleX(0.9810);">Y Axis</div>
<div class="t" style="left:1423.0px;top:483.0px;font-size:12px;line-height:16px;transform:scaleX(0.8823);">Min Max</div>
<div class="abs" style="left:1422.0px;top:497.0px;width:17.0px;height:57.0px;background:#f7f7f7;"></div>
<div class="btn" style="left:1422.0px;top:497.0px;width:17.0px;height:16.0px;"></div>
<svg class="a" style="left:1426.0px;top:501.8px" width="9.0" height="6.0"><polygon points="1.0,5.0 8.0,5.0 4.5,1.0" fill="#000"/></svg>
<div class="btn" style="left:1422.0px;top:515.0px;width:17.0px;height:17.0px;"></div>
<div class="btn" style="left:1422.0px;top:537.0px;width:17.0px;height:17.0px;"></div>
<svg class="a" style="left:1426.0px;top:543.2px" width="9.0" height="6.0"><polygon points="1.0,1.0 8.0,1.0 4.5,5.0" fill="#000"/></svg>
<div class="abs" style="left:1444.0px;top:497.0px;width:18.0px;height:57.0px;background:#f7f7f7;"></div>
<div class="btn" style="left:1444.0px;top:497.0px;width:18.0px;height:16.0px;"></div>
<svg class="a" style="left:1448.5px;top:501.8px" width="9.0" height="6.0"><polygon points="1.0,5.0 8.0,5.0 4.5,1.0" fill="#000"/></svg>
<div class="btn" style="left:1444.0px;top:515.0px;width:18.0px;height:17.0px;"></div>
<div class="btn" style="left:1444.0px;top:537.0px;width:18.0px;height:17.0px;"></div>
<svg class="a" style="left:1448.5px;top:543.2px" width="9.0" height="6.0"><polygon points="1.0,1.0 8.0,1.0 4.5,5.0" fill="#000"/></svg>
<div class="fr" style="left:1470.0px;top:478.5px;width:59.0px;height:53.0px;"></div>
<div class="fl" style="left:1476.0px;top:472.5px;width:22.0px;height:14.0px;"></div>
<div class="t" style="left:1477.0px;top:471.8px;font-size:12px;line-height:16px;transform:scaleX(0.8816);">Line</div>
<div class="ck" style="left:1478.0px;top:487.0px;width:12.0px;height:12.0px;"><svg width="12" height="12" viewBox="0 0 12 12" style="position:absolute;left:0;top:0"><path d="M2.5 5 L4.5 7 L9.5 2 L9.5 5 L4.5 10 L2.5 8 Z" fill="#000"/></svg></div>
<div class="t" style="left:1495.5px;top:484.5px;font-size:12px;line-height:16px;transform:scaleX(0.9484);">Axis</div>
<div class="ck" style="left:1478.0px;top:501.0px;width:12.0px;height:12.0px;"><svg width="12" height="12" viewBox="0 0 12 12" style="position:absolute;left:0;top:0"><path d="M2.5 5 L4.5 7 L9.5 2 L9.5 5 L4.5 10 L2.5 8 Z" fill="#000"/></svg></div>
<div class="t" style="left:1495.5px;top:499.0px;font-size:12px;line-height:16px;transform:scaleX(0.8877);">Data</div>
<div class="btn" style="left:1477.0px;top:513.0px;width:46.0px;height:14.0px;"></div>
<div class="t" style="left:1484.0px;top:512.0px;font-size:12px;line-height:16px;transform:scaleX(0.9597);">Hilight</div>
<div class="btn" style="left:1469.5px;top:536.5px;width:64.5px;height:27.0px;"></div>
<div class="t" style="left:1474.2px;top:542.0px;font-size:12px;line-height:16px;transform:scaleX(0.9371);">[3D] Image</div>
<div class="fr" style="left:1533.0px;top:478.5px;width:56.0px;height:53.0px;"></div>
<div class="fl" style="left:1540.5px;top:472.5px;width:29.5px;height:14.0px;"></div>
<div class="t" style="left:1541.5px;top:471.8px;font-size:12px;line-height:16px;transform:scaleX(0.8966);">Width</div>
<div class="rd" style="left:1541.5px;top:490.5px;width:12.0px;height:12.0px;"></div>
<div class="t" style="left:1559.5px;top:489.0px;font-size:12px;line-height:16px;transform:scaleX(0.8406);">Part</div>
<div class="rd" style="left:1541.5px;top:512.0px;width:12.0px;height:12.0px;"><i></i></div>
<div class="t" style="left:1559.5px;top:510.0px;font-size:12px;line-height:16px;transform:scaleX(0.8454);">Entire</div>
<div class="btn" style="left:1595.0px;top:476.0px;width:143.0px;height:17.5px;"></div>
<div class="t" style="left:1602.5px;top:476.8px;font-size:12px;line-height:16px;transform:scaleX(0.9693);">Correction for absorption</div>
<div class="btn" style="left:1595.0px;top:496.5px;width:103.0px;height:17.0px;"></div>
<div class="t" style="left:1605.0px;top:497.0px;font-size:12px;line-height:16px;transform:scaleX(0.9427);">Noise Reduction</div>
<div class="btn" style="left:1701.0px;top:496.5px;width:37.0px;height:17.0px;"></div>
<div class="t" style="left:1705.0px;top:497.0px;font-size:12px;line-height:16px;transform:scaleX(0.9252);">Reset</div>
<div class="btn" style="left:1751.0px;top:476.0px;width:36.0px;height:25.0px;"></div>
<div class="t" style="left:1755.5px;top:480.5px;font-size:12px;line-height:16px;transform:scaleX(0.9639);">close</div>
<div class="ck" style="left:1593.5px;top:517.5px;width:12.0px;height:12.0px;"><svg width="12" height="12" viewBox="0 0 12 12" style="position:absolute;left:0;top:0"><path d="M2.5 5 L4.5 7 L9.5 2 L9.5 5 L4.5 10 L2.5 8 Z" fill="#000"/></svg></div>
<div class="t" style="left:1611.0px;top:515.0px;font-size:12px;line-height:16px;transform:scaleX(0.8663);">Information</div>
<div class="fr" style="left:1693.0px;top:527.5px;width:95.0px;height:35.0px;"></div>
<div class="fl" style="left:1699.0px;top:521.5px;width:35.0px;height:14.0px;"></div>
<div class="t" style="left:1700.0px;top:520.8px;font-size:12px;line-height:16px;transform:scaleX(0.9516);">Object</div>
<div class="fl" style="left:1742.0px;top:520.0px;width:32.0px;height:14.0px;"></div>
<div class="ck" style="left:1744.0px;top:514.5px;width:12.0px;height:12.0px;"><svg width="12" height="12" viewBox="0 0 12 12" style="position:absolute;left:0;top:0"><path d="M2.5 5 L4.5 7 L9.5 2 L9.5 5 L4.5 10 L2.5 8 Z" fill="#000"/></svg></div>
<div class="t" style="left:1761.0px;top:512.5px;font-size:12px;line-height:16px;transform:scaleX(0.8333);">ID</div>
<div class="tog" style="left:1699.0px;top:538.0px;width:19.0px;height:17.0px;"></div>
<div class="t" style="left:1704.5px;top:538.0px;font-size:12px;line-height:16px;transform:scaleX(1.0000);">A</div>
<div class="tog" style="left:1721.0px;top:538.0px;width:19.0px;height:17.0px;"></div>
<div class="t" style="left:1726.5px;top:538.0px;font-size:12px;line-height:16px;transform:scaleX(1.0000);">B</div>
<div class="tog" style="left:1743.0px;top:538.0px;width:19.0px;height:17.0px;"></div>
<div class="t" style="left:1748.2px;top:538.0px;font-size:12px;line-height:16px;transform:scaleX(1.0000);">C</div>
<div class="btn" style="left:1765.0px;top:538.0px;width:17.0px;height:17.0px;"></div>
<div class="t" style="left:1770.2px;top:538.0px;font-size:12px;line-height:16px;transform:scaleX(1.0000);">L</div>
<div class="btn" style="left:1279.0px;top:569.0px;width:121.0px;height:26.5px;"></div>
<div class="abs" style="left:1281px;top:571px;width:117px;height:22px;overflow:hidden"><div class="t" style="left:-5px;top:1.3px;font-size:15px;line-height:18px;font-weight:bold;transform:scaleX(0.9198)">Lunar Identification</div></div>
<div class="btn" style="left:1409.0px;top:568.5px;width:169.0px;height:27.5px;"></div>
<div class="t" style="left:1427.5px;top:571.5px;font-size:15px;line-height:19px;font-weight:bold;transform:scaleX(0.9408);">Diffraction Analysis</div>
<div class="btn" style="left:1583.0px;top:568.5px;width:105.0px;height:27.5px;"></div>
<div class="t" style="left:1595.5px;top:571.5px;font-size:15px;line-height:19px;font-weight:bold;transform:scaleX(0.8887);">Make Report</div>
<div class="fr" style="left:1047.0px;top:630.0px;width:736.0px;height:89.0px;"></div>
<div class="fl" style="left:1053.0px;top:624.0px;width:68.0px;height:14.0px;"></div>
<div class="t" style="left:1054.0px;top:623.3px;font-size:12px;line-height:16px;transform:scaleX(1.0102);">S/N vs Error</div>
<div class="t" style="left:1056.0px;top:639.0px;font-size:14px;line-height:18px;font-weight:bold;transform:scaleX(0.9334);">S/N (Full drop)</div>
<div class="ed" style="left:1160.0px;top:638.0px;width:55.0px;height:25.0px;"></div>
<div class="t" style="left:1167.0px;top:640.5px;font-size:16px;line-height:20px;font-weight:bold;color:#0000ff;transform:scaleX(0.9442);">4.2</div>
<div class="t" style="left:1240.0px;top:639.0px;font-size:14px;line-height:18px;font-weight:bold;transform:scaleX(0.8570);">S/N</div>
<div class="ed" style="left:1271.0px;top:637.0px;width:48.0px;height:25.0px;"></div>
<div class="t" style="left:1274.0px;top:640.0px;font-size:14px;line-height:18px;font-weight:bold;color:#ff0000;transform:scaleX(0.9764);">4.1</div>
<div class="t" style="left:1327.0px;top:639.0px;font-size:14px;line-height:18px;font-weight:bold;transform:scaleX(0.9611);">expected on</div>
<div class="ed" style="left:1415.0px;top:637.0px;width:48.0px;height:25.0px;"></div>
<div class="t" style="left:1418.0px;top:640.0px;font-size:14px;line-height:18px;font-weight:bold;transform:scaleX(0.9764);">4.7</div>
<div class="t" style="left:1471.0px;top:639.0px;font-size:14px;line-height:18px;font-weight:bold;transform:scaleX(0.9525);">Mag drop</div>
<div class="t" style="left:1567.0px;top:639.0px;font-size:14px;line-height:18px;font-weight:bold;transform:scaleX(0.9570);">Frame exposure</div>
<div class="ed" style="left:1687.0px;top:637.0px;width:48.0px;height:25.0px;"></div>
<div class="t" style="left:1690.0px;top:640.0px;font-size:14px;line-height:18px;font-weight:bold;transform:scaleX(0.9419);">327</div>
<div class="t" style="left:1743.0px;top:639.0px;font-size:14px;line-height:18px;font-weight:bold;transform:scaleX(0.9217);">msec</div>
<div class="t" style="left:1055.5px;top:670.5px;font-size:14px;line-height:18px;font-weight:bold;transform:scaleX(0.9238);">Fresnel</div>
<div class="t" style="left:1055.5px;top:686.0px;font-size:14px;line-height:18px;font-weight:bold;transform:scaleX(0.9263);">Number</div>
<div class="ed" style="left:1111.0px;top:677.0px;width:48.0px;height:25.0px;"></div>
<div class="t" style="left:1114.0px;top:679.0px;font-size:14px;line-height:18px;font-weight:bold;transform:scaleX(0.9419);">321</div>
<div class="t" style="left:1175.0px;top:670.5px;font-size:14px;line-height:18px;font-weight:bold;transform:scaleX(0.9675);">Lower Limit</div>
<div class="t" style="left:1183.0px;top:686.0px;font-size:14px;line-height:18px;font-weight:bold;transform:scaleX(0.9407);">for detect</div>
<div class="ed" style="left:1255.0px;top:677.0px;width:56.0px;height:25.0px;"></div>
<div class="t" style="left:1258.0px;top:679.0px;font-size:14px;line-height:18px;font-weight:bold;color:#0000ff;transform:scaleX(0.9848);">879</div>
<div class="t" style="left:1312.0px;top:679.0px;font-size:14px;line-height:18px;font-weight:bold;transform:scaleX(0.8937);">msec</div>
<div class="t" style="left:1359.0px;top:671.0px;font-size:14px;line-height:18px;font-weight:bold;transform:scaleX(0.9405);">Predicted</div>
<div class="t" style="left:1359.0px;top:686.5px;font-size:13px;line-height:17px;font-weight:bold;transform:scaleX(0.9159);">Time Error</div>
<div class="ed" style="left:1431.0px;top:677.0px;width:64.0px;height:25.0px;"></div>
<div class="t" style="left:1434.0px;top:679.0px;font-size:14px;line-height:18px;font-weight:bold;color:#ff0000;transform:scaleX(0.9910);">85.0</div>
<div class="t" style="left:1495.5px;top:686.5px;font-size:14px;line-height:18px;font-weight:bold;transform:scaleX(0.8937);">msec</div>
<div class="t" style="left:1543.0px;top:670.5px;font-size:14px;line-height:18px;font-weight:bold;transform:scaleX(0.9356);">Expected Error for</div>
<div class="t" style="left:1543.0px;top:686.5px;font-size:14px;line-height:18px;font-weight:bold;transform:scaleX(0.9587);">Analyzing event time</div>
<div class="ed" style="left:1687.0px;top:677.0px;width:48.0px;height:25.0px;"></div>
<div class="t" style="left:1690.0px;top:679.0px;font-size:14px;line-height:18px;font-weight:bold;transform:scaleX(0.9910);">90.3</div>
<div class="t" style="left:1740.0px;top:686.5px;font-size:14px;line-height:18px;font-weight:bold;transform:scaleX(0.9217);">msec</div>
</body></html>
